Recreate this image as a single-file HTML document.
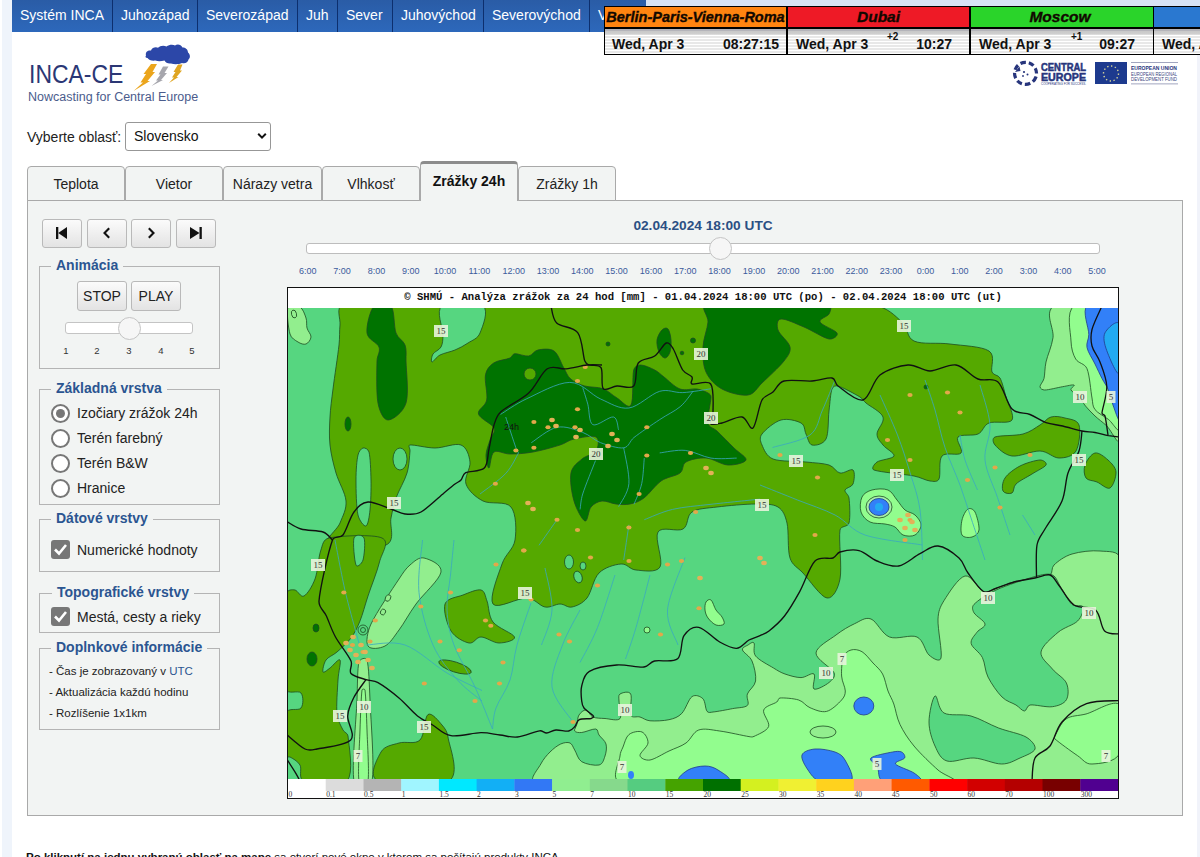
<!DOCTYPE html>
<html><head><meta charset="utf-8">
<style>
*{box-sizing:border-box}
html,body{margin:0;padding:0;width:1200px;height:857px;overflow:hidden;background:#fff;font-family:"Liberation Sans",sans-serif;color:#222}
.a{position:absolute}
#lstrip{left:2px;top:0;width:10px;height:857px;background:#eff4fb}
#rstrip{left:1197px;top:0;width:3px;height:857px;background:#f1f3fa}
#topbg{left:646px;top:0;width:554px;height:7px;background:#d8e3f4}
#nav{left:12px;top:0;width:634px;height:32px;background:linear-gradient(#2a5ca6,#2d68bb)}
.sep{top:0;width:1px;height:32px;background:#0d2f6e}
.nv{top:0;height:31px;line-height:31px;font-size:14px;color:#fff;white-space:nowrap}
/* clocks */
#clk{left:604px;top:6px;width:700px;height:49px;background:#000}
.ch{top:1px;height:20px;line-height:20px;font-size:14.5px;font-weight:bold;font-style:italic;color:#120800;-webkit-text-stroke:0.35px #120800;text-align:center;overflow:hidden;white-space:nowrap}
.cd{white-space:nowrap;overflow:hidden;top:23px;height:25px;background:linear-gradient(#b4b4ba 0,#b4b4ba 2px,#c8c8c8 2px,#cfcfcf 5px,rgba(255,255,255,0) 6px),repeating-linear-gradient(#ffffff 0,#ffffff 1.5px,#e8e8e8 1.5px,#e8e8e8 3px);font-size:14px;font-weight:bold;color:#111}
</style></head><body>
<div class="a" id="lstrip"></div>
<div class="a" id="rstrip"></div>
<div class="a" id="topbg"></div>
<div class="a" id="nav"></div>
<div class="a nv" style="left:20px">Systém INCA</div>
<div class="a sep" style="left:112px"></div>
<div class="a nv" style="left:121px">Juhozápad</div>
<div class="a sep" style="left:197px"></div>
<div class="a nv" style="left:206px">Severozápad</div>
<div class="a sep" style="left:297px"></div>
<div class="a nv" style="left:306px">Juh</div>
<div class="a sep" style="left:337px"></div>
<div class="a nv" style="left:346px">Sever</div>
<div class="a sep" style="left:392px"></div>
<div class="a nv" style="left:401px">Juhovýchod</div>
<div class="a sep" style="left:483px"></div>
<div class="a nv" style="left:492px">Severovýchod</div>
<div class="a sep" style="left:589px"></div>
<div class="a nv" style="left:598px">Východ</div>

<div class="a" id="clk"></div>
<div class="a" style="left:605px;top:7px;width:181px;height:20px;background:#ff8410"></div>
<div class="a ch" style="left:605px;top:7px;width:181px">Berlin-Paris-Vienna-Roma</div>
<div class="a" style="left:788px;top:7px;width:181px;height:20px;background:#ee1a26"></div>
<div class="a ch" style="left:788px;top:7px;width:181px;font-size:15.5px">Dubai</div>
<div class="a" style="left:971px;top:7px;width:182px;height:20px;background:#2ad42a"></div>
<div class="a ch" style="left:969px;top:7px;width:182px;font-size:15.5px">Moscow</div>
<div class="a" style="left:1154px;top:7px;width:46px;height:20px;background:#2a78d0"></div>


<div class="a cd" style="left:605px;top:29px;width:181px"><span class="a" style="left:7px;top:6.5px">Wed, Apr 3</span><span class="a" style="right:7px;top:6.5px">08:27:15</span></div>
<div class="a cd" style="left:788px;top:29px;width:181px"><span class="a" style="left:8px;top:6.5px">Wed, Apr 3</span><span class="a" style="left:99px;top:2px;font-size:10px">+2</span><span class="a" style="right:17px;top:6.5px">10:27</span></div>
<div class="a cd" style="left:971px;top:29px;width:182px"><span class="a" style="left:8px;top:6.5px">Wed, Apr 3</span><span class="a" style="left:100px;top:2px;font-size:10px">+1</span><span class="a" style="right:18px;top:6.5px">09:27</span></div>
<div class="a cd" style="left:1154px;top:29px;width:46px"><span class="a" style="left:8px;top:6.5px">Wed, A</span></div>
<!-- LOGO -->
<div class="a" style="left:29px;top:60px;font-size:25.5px;color:#2b3775;transform:scaleX(0.9);transform-origin:0 0;white-space:nowrap">INCA-CE</div>
<div class="a" style="left:28px;top:89.5px;font-size:12.5px;color:#4b5c8c;white-space:nowrap">Nowcasting for Central Europe</div>
<svg class="a" style="left:130px;top:42px" width="70" height="52" viewBox="0 0 70 52">
<path d="M16 13.5 C15 10 18 8 21 8.5 C22 5.5 26 4.5 28 5.8 C30 3.5 34 3.2 36.5 4.5 C39 2.5 43 2.3 45 3.5 C47.5 1.8 51 2.5 52.5 5.5 C55.5 5.5 58 7.5 58 10.5 C60.5 12.5 60.5 16 58.5 17.5 C58 20.5 55 22 52 21 C49 22.5 44 22.5 41 21.5 C38 22 35.5 20.5 34.5 18.5 C31 19.5 27.5 19.5 25.5 18.5 C22 19 18.5 18 17.5 16 C15.5 16 15 14.5 16 13.5 Z" fill="#2c47a8"/>
<path d="M21 22 L27 22 L22.5 30 L25 30 L17.5 39 L20 39 L3.5 49 L13 40.5 L10.5 40.5 L16 32 L13.5 32 Z" fill="#eba51c"/>
<path d="M33 24.5 L38.5 24.5 L34.5 31 L37 31 L31 38 L33 38 L21.5 44 L28 38.5 L26 38.5 L30.5 32.5 L28.5 32.5 Z" fill="#a6a6ad"/>
<path d="M48 22.5 L52.5 22.5 L50 28.5 L52 28.5 L46.5 35 L48.5 35 L39 41 L44 35.5 L42 35.5 L45.5 30 L43.5 30 Z" fill="#dfa521"/>
</svg>
<!-- EU logos -->
<svg class="a" style="left:1010px;top:60px" width="175" height="28" viewBox="0 0 175 28">
<g fill="#27357c">
<circle cx="15.5" cy="13.5" r="11" fill="none" stroke="#27357c" stroke-width="3.2" stroke-dasharray="5.5 3" transform="rotate(20 16 13.5)"/>
<path d="M5 12 L9.5 6.5 L10.5 11 Z"/>
<circle cx="14" cy="12" r="1.1"/><circle cx="17.5" cy="14.5" r="1"/><circle cx="13" cy="16" r="0.9"/>
</g>
<text x="31" y="10.5" font-family="Liberation Sans" font-weight="bold" font-size="10.5" fill="#27357c" stroke="#27357c" stroke-width="0.5" textLength="45" lengthAdjust="spacingAndGlyphs">CENTRAL</text>
<text x="31" y="20.5" font-family="Liberation Sans" font-weight="bold" font-size="10.5" fill="#27357c" stroke="#27357c" stroke-width="0.5" textLength="45" lengthAdjust="spacingAndGlyphs">EUROPE</text>
<text x="31" y="25" font-family="Liberation Sans" font-size="3" fill="#27357c" textLength="45" lengthAdjust="spacingAndGlyphs">COOPERATING FOR SUCCESS.</text>
<rect x="85" y="2" width="32" height="22" fill="#1d3a8e"/>
<circle cx="101" cy="13.5" r="7.5" fill="none" stroke="#dcd89a" stroke-width="1.4" stroke-dasharray="1.4 2.5"/>
<rect x="121" y="2" width="47" height="0.8" fill="#8a90b0"/>
<rect x="121" y="23.5" width="47" height="0.8" fill="#8a90b0"/>
<text x="121" y="9.5" font-family="Liberation Sans" font-size="6" font-weight="bold" fill="#27357c" textLength="46" lengthAdjust="spacingAndGlyphs">EUROPEAN UNION</text>
<text x="121" y="15.5" font-family="Liberation Sans" font-size="5" fill="#3a4580" textLength="46" lengthAdjust="spacingAndGlyphs">EUROPEAN REGIONAL</text>
<text x="121" y="21" font-family="Liberation Sans" font-size="5" fill="#3a4580" textLength="46" lengthAdjust="spacingAndGlyphs">DEVELOPMENT FUND</text>
</svg>
<!-- select -->
<div class="a" style="left:27px;top:129px;font-size:14px;color:#222">Vyberte oblasť:</div>
<div class="a" style="left:125px;top:122px;width:146px;height:29px;border:1px solid #979797;border-radius:3px;background:#fff"></div>
<div class="a" style="left:134px;top:127.5px;font-size:14px;color:#111">Slovensko</div>
<svg class="a" style="left:257px;top:132px" width="10" height="8" viewBox="0 0 10 8"><path d="M1.2 1.8 L5 5.6 L8.8 1.8" stroke="#111" stroke-width="2" fill="none"/></svg>
<!-- panel -->
<div class="a" style="left:27px;top:200px;width:1156px;height:616px;border:1px solid #a9a9a9;background:#f2f4f3"></div>
<!-- tabs -->
<div class="a" style="left:27px;top:166px;width:98px;height:35px;border:1px solid #a9a9a9;border-radius:4px 4px 0 0;background:#f2f4f3"></div>
<div class="a" style="left:27px;top:176px;width:98px;text-align:center;font-size:14px;color:#222">Teplota</div>
<div class="a" style="left:125px;top:166px;width:98px;height:35px;border:1px solid #a9a9a9;border-radius:4px 4px 0 0;background:#f2f4f3"></div>
<div class="a" style="left:125px;top:176px;width:98px;text-align:center;font-size:14px;color:#222">Vietor</div>
<div class="a" style="left:223px;top:166px;width:99px;height:35px;border:1px solid #a9a9a9;border-radius:4px 4px 0 0;background:#f2f4f3"></div>
<div class="a" style="left:223px;top:176px;width:99px;text-align:center;font-size:14px;color:#222">Nárazy vetra</div>
<div class="a" style="left:322px;top:166px;width:98px;height:35px;border:1px solid #a9a9a9;border-radius:4px 4px 0 0;background:#f2f4f3"></div>
<div class="a" style="left:322px;top:176px;width:98px;text-align:center;font-size:14px;color:#222">Vlhkosť</div>
<div class="a" style="left:420px;top:161px;width:98px;height:40px;border:1px solid #a9a9a9;border-top:3px solid #8c8c8c;border-bottom:none;border-radius:4px 4px 0 0;background:#f2f4f3"></div>
<div class="a" style="left:420px;top:172.5px;width:98px;text-align:center;font-size:14px;font-weight:bold;color:#111">Zrážky 24h</div>
<div class="a" style="left:518px;top:166px;width:98px;height:35px;border:1px solid #a9a9a9;border-radius:4px 4px 0 0;background:#f2f4f3"></div>
<div class="a" style="left:518px;top:176px;width:98px;text-align:center;font-size:14px;color:#222">Zrážky 1h</div>
<!-- sidebar -->
<style>
.btn{border:1px solid #b9b9b9;border-radius:3px;background:linear-gradient(#fbfbfb,#e3e3e3)}
.fs{border:1px solid #b4b4b4}
.lg{font-size:14px;font-weight:bold;color:#2b5591;background:#f2f4f3;padding:0 5px;white-space:nowrap}
.rl{font-size:14px;color:#222;white-space:nowrap}
.rad{width:19px;height:19px;border:2px solid #777;border-radius:50%;background:#fff}
.chk{width:19px;height:19px;border-radius:3px;background:#777}
.inf{font-size:11.5px;color:#222;white-space:nowrap}
</style>
<div class="a btn" style="left:42px;top:219px;width:40px;height:29px"></div>
<div class="a btn" style="left:87px;top:219px;width:40px;height:29px"></div>
<div class="a btn" style="left:131px;top:219px;width:40px;height:29px"></div>
<div class="a btn" style="left:176px;top:219px;width:40px;height:29px"></div>
<svg class="a" style="left:42px;top:219px" width="180" height="29">
<rect x="14" y="8" width="2.3" height="12" fill="#111"/><path d="M16.2 14 L25 8 L25 20 Z" fill="#111"/>
<path d="M67.2 9.2 L62.5 14 L67.2 18.8" stroke="#111" stroke-width="2.1" fill="none"/>
<path d="M106.8 9.2 L111.5 14 L106.8 18.8" stroke="#111" stroke-width="2.1" fill="none"/>
<path d="M148 8 L157.5 14 L148 20 Z" fill="#111"/><rect x="157.5" y="8" width="2.3" height="12" fill="#111"/>
</svg>
<!-- Animacia -->
<div class="a fs" style="left:39px;top:266px;width:181px;height:103px"></div>
<div class="a lg" style="left:51px;top:257px">Animácia</div>
<div class="a btn" style="left:77px;top:281px;width:50px;height:30px"></div>
<div class="a btn" style="left:131px;top:281px;width:50px;height:30px"></div>
<div class="a rl" style="left:77px;top:288px;width:50px;text-align:center">STOP</div>
<div class="a rl" style="left:131px;top:288px;width:50px;text-align:center">PLAY</div>
<div class="a" style="left:65px;top:322px;width:128px;height:12px;border:1px solid #c4c4c4;border-radius:3px;background:#fff"></div>
<div class="a" style="left:118px;top:317px;width:23px;height:23px;border:1px solid #c4c4c4;border-radius:50%;background:#f6f6f6"></div>
<div class="a" style="left:61px;top:345px;width:10px;text-align:center;font-size:9.5px;color:#333">1</div>
<div class="a" style="left:92px;top:345px;width:10px;text-align:center;font-size:9.5px;color:#333">2</div>
<div class="a" style="left:124px;top:345px;width:10px;text-align:center;font-size:9.5px;color:#333">3</div>
<div class="a" style="left:156px;top:345px;width:10px;text-align:center;font-size:9.5px;color:#333">4</div>
<div class="a" style="left:187px;top:345px;width:10px;text-align:center;font-size:9.5px;color:#333">5</div>
<!-- Zakladna vrstva -->
<div class="a fs" style="left:39px;top:389px;width:181px;height:116px"></div>
<div class="a lg" style="left:51px;top:380px">Základná vrstva</div>
<div class="a rad" style="left:51px;top:404px"></div><div class="a" style="left:56px;top:409px;width:9px;height:9px;border-radius:50%;background:#777"></div>
<div class="a rad" style="left:51px;top:429px"></div>
<div class="a rad" style="left:51px;top:454px"></div>
<div class="a rad" style="left:51px;top:479px"></div>
<div class="a rl" style="left:77px;top:405px">Izočiary zrážok 24h</div>
<div class="a rl" style="left:77px;top:430px">Terén farebný</div>
<div class="a rl" style="left:77px;top:455px">Terén B&amp;W</div>
<div class="a rl" style="left:77px;top:480px">Hranice</div>
<!-- Datove vrstvy -->
<div class="a fs" style="left:39px;top:519px;width:181px;height:53px"></div>
<div class="a lg" style="left:51px;top:510px">Dátové vrstvy</div>
<div class="a chk" style="left:51px;top:540px"></div>
<svg class="a" style="left:51px;top:540px" width="19" height="19"><path d="M4 9.5 L8 13.5 L15 5" stroke="#fff" stroke-width="2.6" fill="none"/></svg>
<div class="a rl" style="left:77px;top:542px">Numerické hodnoty</div>
<!-- Topograficke -->
<div class="a fs" style="left:39px;top:593px;width:181px;height:40px"></div>
<div class="a lg" style="left:52px;top:584px">Topografické vrstvy</div>
<div class="a chk" style="left:51px;top:607px"></div>
<svg class="a" style="left:51px;top:607px" width="19" height="19"><path d="M4 9.5 L8 13.5 L15 5" stroke="#fff" stroke-width="2.6" fill="none"/></svg>
<div class="a rl" style="left:77px;top:609px">Mestá, cesty a rieky</div>
<!-- Doplnkove -->
<div class="a fs" style="left:39px;top:648px;width:181px;height:82px"></div>
<div class="a lg" style="left:51px;top:639px">Doplnkové informácie</div>
<div class="a inf" style="left:49px;top:665px">- Čas je zobrazovaný v <span style="color:#2b5591">UTC</span></div>
<div class="a inf" style="left:49px;top:686px">- Aktualizácia každú hodinu</div>
<div class="a inf" style="left:49px;top:707px">- Rozlíšenie 1x1km</div>
<!-- time slider -->
<div class="a" style="left:600px;top:218px;width:206px;text-align:center;font-size:13.7px;font-weight:bold;color:#2b4f83">02.04.2024 18:00 UTC</div>
<div class="a" style="left:306px;top:243px;width:794px;height:11px;border:1px solid #bdbdbd;border-radius:3px;background:#fff"></div>
<div class="a" style="left:709px;top:237px;width:23px;height:23px;border:1px solid #c4c4c4;border-radius:50%;background:#f6f6f6"></div>
<div class="a" style="left:287.8px;top:266px;width:40px;text-align:center;font-size:9px;color:#3b5a9c">6:00</div>
<div class="a" style="left:322.1px;top:266px;width:40px;text-align:center;font-size:9px;color:#3b5a9c">7:00</div>
<div class="a" style="left:356.4px;top:266px;width:40px;text-align:center;font-size:9px;color:#3b5a9c">8:00</div>
<div class="a" style="left:390.7px;top:266px;width:40px;text-align:center;font-size:9px;color:#3b5a9c">9:00</div>
<div class="a" style="left:425.1px;top:266px;width:40px;text-align:center;font-size:9px;color:#3b5a9c">10:00</div>
<div class="a" style="left:459.4px;top:266px;width:40px;text-align:center;font-size:9px;color:#3b5a9c">11:00</div>
<div class="a" style="left:493.7px;top:266px;width:40px;text-align:center;font-size:9px;color:#3b5a9c">12:00</div>
<div class="a" style="left:528.0px;top:266px;width:40px;text-align:center;font-size:9px;color:#3b5a9c">13:00</div>
<div class="a" style="left:562.3px;top:266px;width:40px;text-align:center;font-size:9px;color:#3b5a9c">14:00</div>
<div class="a" style="left:596.6px;top:266px;width:40px;text-align:center;font-size:9px;color:#3b5a9c">15:00</div>
<div class="a" style="left:630.9px;top:266px;width:40px;text-align:center;font-size:9px;color:#3b5a9c">16:00</div>
<div class="a" style="left:665.2px;top:266px;width:40px;text-align:center;font-size:9px;color:#3b5a9c">17:00</div>
<div class="a" style="left:699.6px;top:266px;width:40px;text-align:center;font-size:9px;color:#3b5a9c">18:00</div>
<div class="a" style="left:733.9px;top:266px;width:40px;text-align:center;font-size:9px;color:#3b5a9c">19:00</div>
<div class="a" style="left:768.2px;top:266px;width:40px;text-align:center;font-size:9px;color:#3b5a9c">20:00</div>
<div class="a" style="left:802.5px;top:266px;width:40px;text-align:center;font-size:9px;color:#3b5a9c">21:00</div>
<div class="a" style="left:836.8px;top:266px;width:40px;text-align:center;font-size:9px;color:#3b5a9c">22:00</div>
<div class="a" style="left:871.1px;top:266px;width:40px;text-align:center;font-size:9px;color:#3b5a9c">23:00</div>
<div class="a" style="left:905.4px;top:266px;width:40px;text-align:center;font-size:9px;color:#3b5a9c">0:00</div>
<div class="a" style="left:939.7px;top:266px;width:40px;text-align:center;font-size:9px;color:#3b5a9c">1:00</div>
<div class="a" style="left:974.1px;top:266px;width:40px;text-align:center;font-size:9px;color:#3b5a9c">2:00</div>
<div class="a" style="left:1008.4px;top:266px;width:40px;text-align:center;font-size:9px;color:#3b5a9c">3:00</div>
<div class="a" style="left:1042.7px;top:266px;width:40px;text-align:center;font-size:9px;color:#3b5a9c">4:00</div>
<div class="a" style="left:1077.0px;top:266px;width:40px;text-align:center;font-size:9px;color:#3b5a9c">5:00</div>
<!-- map box -->
<div class="a" style="left:287px;top:287px;width:832px;height:512px;border:1px solid #111;background:#fff"></div>
<div class="a" style="left:288px;top:290.5px;width:830px;text-align:center;font-family:'Liberation Mono',monospace;font-weight:bold;font-size:10.6px;color:#111;white-space:nowrap">© SHMÚ - Analýza zrážok za 24 hod [mm] - 01.04.2024 18:00 UTC (po) - 02.04.2024 18:00 UTC (ut)</div>
<div id="map" class="a" style="left:288px;top:308px;width:830px;height:471px;background:#56d680;overflow:hidden"></div>
<svg class="a" style="left:288px;top:308px" width="830" height="471" viewBox="0 0 830 471"><path d="M247.0 473.0 C239.8 472.8 250.3 460.8 252.8 456.0 C255.3 451.2 258.7 447.3 262.0 444.0 C265.3 440.7 269.4 437.5 272.7 436.0 C276.0 434.5 279.7 434.0 282.0 435.0 C284.3 436.0 284.9 439.1 286.7 442.0 C288.7 445.1 289.7 451.2 293.7 453.7 C297.8 456.2 307.1 457.9 311.0 457.0 C314.9 456.1 315.8 451.5 317.0 448.0 C318.2 444.5 319.0 439.5 318.0 436.0 C317.0 432.5 312.7 429.5 311.0 427.0 C309.4 424.7 310.4 421.4 307.7 421.0 C304.8 420.6 297.2 424.2 293.7 424.5 C290.8 424.8 287.5 424.4 286.7 423.0 C285.9 421.6 288.3 418.7 289.0 416.0 C289.7 413.3 289.5 409.3 291.0 407.0 C292.5 404.7 295.7 401.7 298.0 402.0 C300.3 402.3 301.8 407.6 305.0 409.0 C308.2 410.4 312.5 410.2 317.0 410.5 C321.5 410.8 329.7 413.4 332.0 410.5 C334.3 407.6 331.0 397.1 331.0 393.0 C331.0 390.2 330.1 387.2 332.0 386.0 C333.9 384.8 340.9 382.5 342.7 386.0 C344.5 389.5 341.2 403.2 342.7 407.0 C344.1 410.5 348.8 408.0 352.0 409.0 C355.2 410.0 357.7 412.4 362.0 412.8 C366.8 413.2 375.7 412.9 381.0 411.7 C386.3 410.5 390.0 409.2 393.8 405.4 C397.6 401.5 400.5 391.1 404.0 388.6 C407.5 386.2 412.4 388.3 414.9 390.7 C417.4 393.2 417.3 401.1 419.0 403.3 C420.5 405.2 422.6 404.3 425.0 404.0 C429.3 403.6 439.0 401.7 444.7 400.6 C450.4 399.5 456.9 399.8 459.4 397.4 C461.8 395.0 458.0 390.1 459.4 386.0 C460.8 381.9 466.8 378.5 467.6 373.0 C468.4 367.5 466.2 358.2 464.0 353.0 C461.8 347.8 455.2 344.7 454.5 342.0 C453.8 339.3 458.1 338.2 460.0 337.0 C461.9 335.8 464.7 333.2 466.0 335.0 C467.3 336.8 464.4 343.9 467.6 348.0 C470.9 352.2 480.6 357.0 485.5 360.0 C489.9 362.7 492.4 364.4 497.0 366.0 C501.6 367.6 508.2 369.6 513.0 369.6 C517.8 369.6 523.8 364.1 526.0 366.0 C528.2 367.9 523.5 379.6 526.0 381.0 C528.5 382.4 537.7 377.2 541.0 374.5 C544.3 371.8 547.8 368.7 546.0 364.7 C543.8 359.8 527.7 351.3 528.0 345.0 C528.3 338.7 541.6 331.9 548.0 327.0 C554.4 322.1 560.8 318.4 566.6 315.7 C572.4 313.0 577.2 308.8 583.0 311.0 C588.8 313.2 593.8 326.0 601.5 329.0 C609.2 332.0 622.4 326.0 629.0 329.0 C635.6 332.0 637.0 343.5 641.0 347.0 C644.7 350.3 651.8 354.8 653.0 350.0 C654.5 344.0 649.5 320.6 650.0 311.0 C650.4 303.3 651.9 299.2 656.0 292.6 C660.5 285.4 670.4 269.5 677.0 268.0 C683.6 266.5 690.4 281.4 695.5 283.5 C700.1 285.4 702.8 282.0 707.6 280.5 C712.7 278.9 719.4 275.8 726.0 274.0 C732.6 272.2 741.0 271.2 747.0 270.0 C753.0 268.8 758.8 269.2 762.0 267.0 C765.2 264.8 762.9 260.0 766.0 257.0 C769.7 253.5 776.3 248.3 784.0 246.0 C791.7 243.7 804.0 242.2 812.0 243.0 C820.0 243.8 831.3 242.4 832.0 251.0 C835.3 289.3 915.0 441.5 832.0 473.0 C734.5 510.0 343.5 475.8 247.0 473.0 Z" fill="#92ee8e" stroke="#1d4d22" stroke-width="0.8"/><path d="M766.5 -2.0 C777.7 -7.3 821.1 -24.3 832.0 -2.0 C842.9 20.3 834.2 112.0 832.0 132.0 C831.2 139.7 823.0 122.0 818.8 118.0 C814.6 114.0 810.5 111.3 807.0 108.0 C803.5 104.7 800.2 101.2 797.5 98.0 C794.8 94.8 793.4 91.2 791.0 88.5 C788.6 85.8 783.8 83.9 783.0 82.0 C782.2 80.1 787.4 77.5 786.0 77.0 C784.6 76.5 779.2 77.9 774.7 78.7 C769.8 79.5 760.5 82.0 756.7 82.0 C754.4 82.0 752.1 80.6 752.0 78.7 C751.9 76.8 755.1 74.0 756.0 70.5 C757.0 66.4 756.6 60.5 758.0 54.0 C759.5 47.2 763.6 39.0 765.0 29.7 C766.4 20.4 755.3 3.3 766.5 -2.0 Z" fill="#92ee8e" stroke="#1d4d22" stroke-width="0.8"/><path d="M786.0 -2.0 C794.2 -7.8 825.6 -19.2 832.0 -2.0 C839.7 18.5 833.9 102.1 832.0 121.0 C831.4 127.0 824.6 114.6 820.4 111.4 C816.2 108.2 809.7 105.2 807.0 101.6 C804.3 98.0 804.9 94.7 804.0 90.0 C802.7 83.2 801.7 67.2 799.0 60.7 C796.7 55.2 790.4 55.6 787.7 51.0 C785.0 46.4 783.2 40.4 783.0 33.0 C782.7 24.2 777.8 3.8 786.0 -2.0 Z" fill="#92fd8e" stroke="#1d4d22" stroke-width="0.8"/><path d="M799.0 -2.0 C804.2 -6.7 828.3 -14.7 832.0 -2.0 C837.5 16.9 833.1 94.7 832.0 111.4 C831.6 117.4 827.2 102.9 825.3 98.0 C823.4 93.1 822.3 86.6 820.4 82.0 C818.5 77.4 816.2 74.8 814.0 70.5 C811.8 66.2 809.5 61.2 807.0 56.0 C804.5 50.8 800.0 44.4 799.0 39.5 C798.0 34.6 800.8 31.7 800.8 26.4 C800.8 19.5 793.8 2.7 799.0 -2.0 Z" fill="#3280f8" stroke="#223a8a" stroke-width="0.8"/><path d="M832.0 16.6 C829.6 10.2 819.2 20.5 817.0 24.8 C814.8 29.2 816.3 35.9 818.8 42.7 C821.3 49.5 829.8 70.0 832.0 65.6 C834.2 61.3 834.5 23.4 832.0 16.6 Z" fill="#22aaf2" stroke="#223a8a" stroke-width="0.8"/><path d="M55.0 -2.0 C144.0 -5.2 492.8 -4.7 586.0 -2.0 C598.9 -1.6 607.3 8.2 614.0 14.0 C620.7 19.8 618.0 29.3 626.0 33.0 C634.0 36.7 649.5 34.3 662.0 36.0 C674.5 37.7 694.0 38.3 701.0 43.0 C708.0 47.7 702.2 59.5 704.0 64.0 C705.5 67.7 710.0 66.5 712.0 70.0 C714.3 74.2 716.0 82.0 718.0 89.0 C720.0 96.0 726.8 107.7 724.0 112.0 C721.2 116.3 706.7 112.7 701.0 115.0 C695.3 117.3 695.2 123.7 690.0 126.0 C684.8 128.3 672.8 125.8 670.0 129.0 C667.2 132.2 675.7 141.8 673.0 145.0 C670.3 148.2 657.7 143.7 654.0 148.0 C650.3 152.3 653.0 166.8 651.0 171.0 C649.4 174.3 645.7 173.4 642.0 173.0 C637.8 172.5 632.6 169.3 626.0 168.0 C616.7 166.2 592.2 164.3 586.0 162.0 C582.8 160.8 586.2 156.0 589.0 154.0 C592.3 151.7 605.0 150.8 606.0 148.0 C607.0 145.2 597.8 140.7 595.0 137.0 C592.2 133.3 589.0 130.7 589.0 126.0 C589.0 121.3 596.8 114.2 595.0 109.0 C593.2 103.8 581.8 98.3 578.0 95.0 C575.4 92.8 574.9 90.8 572.0 89.0 C567.3 86.2 554.7 79.3 550.0 78.0 C547.4 77.3 544.9 78.5 544.0 81.0 C542.5 85.2 542.0 94.7 541.0 103.0 C540.0 111.3 540.8 125.3 538.0 131.0 C535.3 136.4 527.3 137.8 524.0 137.0 C520.7 136.2 519.8 129.7 518.0 126.0 C516.2 122.3 517.2 117.3 513.0 115.0 C508.8 112.7 499.5 110.2 493.0 112.0 C486.5 113.8 477.2 121.8 474.0 126.0 C471.3 129.5 472.2 133.0 474.0 137.0 C475.8 141.2 478.4 148.4 485.0 151.0 C492.3 153.8 508.7 153.0 518.0 154.0 C527.2 155.0 535.3 155.2 541.0 157.0 C546.2 158.7 548.0 164.2 552.0 165.0 C556.0 165.8 562.8 160.2 565.0 162.0 C567.2 163.8 566.3 172.7 565.0 176.0 C563.7 179.3 557.7 179.7 557.0 182.0 C556.3 184.3 560.6 186.4 561.0 190.0 C561.7 195.5 562.5 209.7 561.0 215.0 C559.8 219.4 552.7 217.5 552.0 222.0 C550.5 231.3 554.2 259.7 552.0 271.0 C550.3 280.0 545.2 291.0 539.0 290.0 C532.8 289.0 521.2 271.7 515.0 265.0 C509.6 259.2 504.4 257.6 502.0 250.0 C499.3 241.7 501.0 223.5 499.0 215.0 C497.3 207.9 495.2 202.2 490.0 199.0 C484.8 195.8 476.9 196.0 468.0 196.0 C457.8 196.0 439.7 197.7 429.0 199.0 C418.9 200.3 409.7 200.3 404.0 204.0 C398.3 207.7 400.7 217.7 395.0 221.0 C389.3 224.3 373.8 217.7 370.0 224.0 C366.2 230.3 375.7 252.7 372.0 259.0 C368.3 265.3 354.5 262.5 348.0 262.0 C341.6 261.5 339.2 255.5 333.0 256.0 C326.8 256.5 316.7 259.3 311.0 265.0 C305.3 270.7 303.5 284.3 299.0 290.0 C294.6 295.5 288.5 298.0 284.0 299.0 C279.5 300.0 276.5 296.0 272.0 296.0 C267.5 296.0 262.5 300.0 257.0 299.0 C251.5 298.0 247.0 290.5 239.0 290.0 C230.3 289.5 209.2 301.7 205.0 296.0 C200.8 290.3 210.3 266.7 214.0 256.0 C217.5 245.7 225.5 241.5 227.0 232.0 C228.5 222.5 228.3 205.5 223.0 199.0 C217.7 192.5 202.5 196.8 195.0 193.0 C187.5 189.2 180.2 182.5 178.0 176.0 C175.8 169.5 182.8 160.5 182.0 154.0 C181.2 147.5 178.8 139.3 173.0 137.0 C167.2 134.7 155.5 140.0 147.0 140.0 C138.5 140.0 126.2 136.5 122.0 137.0 C119.6 137.3 122.3 140.6 122.0 143.0 C121.5 147.7 121.3 157.2 119.0 165.0 C116.7 172.8 110.7 182.5 108.0 190.0 C105.3 197.5 104.7 202.2 103.0 210.0 C101.3 217.8 108.1 232.6 98.0 237.0 C87.7 241.5 48.7 240.7 41.0 237.0 C33.3 233.3 49.2 222.3 52.0 215.0 C54.8 207.7 58.7 201.3 58.0 193.0 C57.3 184.7 50.7 174.3 48.0 165.0 C45.3 155.7 43.0 146.3 42.0 137.0 C41.0 127.7 41.5 118.3 42.0 109.0 C42.5 99.7 43.6 92.2 45.0 81.0 C46.5 69.0 49.8 47.7 51.0 37.0 C51.9 29.0 51.3 23.5 52.0 17.0 C52.7 10.5 47.3 -1.7 55.0 -2.0 Z" fill="#55a900" stroke="#1d4d22" stroke-width="0.8"/><path d="M-1.0 285.0 C-0.7 281.6 4.2 281.5 7.0 282.0 C9.8 282.5 12.7 289.8 16.0 288.0 C19.3 286.2 24.2 278.5 27.0 271.0 C29.8 263.5 30.3 249.8 32.6 243.0 C34.6 237.1 34.9 231.3 41.0 230.0 C51.2 227.8 85.6 226.0 94.0 230.0 C102.4 234.0 93.8 244.6 91.5 254.0 C89.2 263.7 83.2 278.2 80.0 288.0 C76.8 297.8 74.8 306.0 72.0 313.0 C69.2 320.0 66.8 324.8 63.0 330.0 C59.2 335.2 53.2 340.3 49.0 344.0 C44.9 347.6 40.3 348.7 38.0 352.0 C35.7 355.3 34.3 362.7 35.0 364.0 C35.7 365.3 39.4 361.9 42.0 360.0 C44.8 358.0 50.7 350.0 52.0 352.0 C53.3 354.0 50.4 364.0 50.0 372.0 C49.5 381.0 48.2 397.7 49.0 406.0 C49.7 412.8 53.2 418.3 55.0 422.0 C56.4 424.8 59.8 424.9 60.0 428.0 C60.7 436.5 66.3 465.5 59.0 473.0 C51.7 480.5 23.8 475.7 16.0 473.0 C9.8 470.9 14.3 461.0 12.0 457.0 C9.7 453.0 4.3 450.3 2.0 449.0 C0.6 448.2 -1.9 450.6 -2.0 449.0 C-2.7 441.7 -4.5 413.2 -2.0 405.0 C-0.1 399.0 10.5 403.3 13.0 400.0 C15.5 396.7 15.5 388.2 13.0 385.0 C10.5 381.8 -1.1 387.1 -2.0 381.0 C-4.3 364.3 -2.5 301.5 -1.0 285.0 Z" fill="#55a900" stroke="#1d4d22" stroke-width="0.8"/><path d="M707.0 129.0 C711.7 127.2 727.5 128.0 735.0 126.0 C742.4 124.0 747.3 119.8 752.0 117.0 C756.7 114.2 758.8 110.2 763.0 109.0 C767.2 107.8 772.3 108.7 777.0 110.0 C781.7 111.3 789.2 111.5 791.0 117.0 C792.8 122.5 791.3 137.5 788.0 143.0 C784.7 148.5 777.0 150.0 771.0 150.0 C765.0 150.0 759.8 143.3 752.0 143.0 C744.2 142.7 731.5 149.0 724.0 148.0 C716.5 147.0 709.8 140.2 707.0 137.0 C704.9 134.6 704.0 130.2 707.0 129.0 Z" fill="#55a900" stroke="#1d4d22" stroke-width="0.8"/><path d="M717.0 170.0 C719.8 165.8 726.2 161.0 732.0 158.0 C737.8 155.0 747.7 152.2 752.0 152.0 C755.1 151.9 759.3 154.7 758.0 157.0 C756.7 159.3 749.0 162.8 744.0 166.0 C739.0 169.2 731.3 172.8 728.0 176.0 C725.1 178.7 726.2 183.8 724.0 185.0 C721.8 186.2 716.2 185.5 715.0 183.0 C713.8 180.5 714.2 174.2 717.0 170.0 Z" fill="#55a900" stroke="#1d4d22" stroke-width="0.8"/><path d="M797.0 157.0 C798.5 152.8 803.2 145.8 807.0 145.0 C810.8 144.2 816.5 148.8 820.0 152.0 C823.5 155.2 827.7 159.3 828.0 164.0 C828.3 168.7 825.2 178.3 822.0 180.0 C818.8 181.7 813.0 175.7 809.0 174.0 C805.0 172.3 800.0 172.8 798.0 170.0 C796.0 167.2 795.5 161.2 797.0 157.0 Z" fill="#55a900" stroke="#1d4d22" stroke-width="0.8"/><path d="M157.0 296.0 C159.0 290.0 169.0 289.3 175.0 287.0 C181.0 284.7 189.0 281.0 193.0 282.0 C197.0 283.0 197.2 288.3 199.0 293.0 C201.0 298.3 200.4 308.0 205.0 314.0 C209.6 320.0 225.5 325.5 226.5 329.0 C227.5 332.5 216.6 335.0 211.0 335.0 C205.4 335.0 198.0 329.0 193.0 329.0 C188.0 329.0 186.0 336.0 181.0 335.0 C176.0 334.0 167.0 329.5 163.0 323.0 C159.0 316.5 155.0 302.0 157.0 296.0 Z" fill="#55a900" stroke="#1d4d22" stroke-width="0.8"/><ellipse cx="167.0" cy="359.0" rx="17" ry="5" fill="#55a900" transform="rotate(18 167.0 359.0)" stroke="#1d4d22" stroke-width="0.8"/><path d="M140.0 406.5 C143.7 404.0 150.7 413.2 154.0 417.0 C157.3 420.8 159.3 423.7 160.0 429.0 C161.2 438.3 172.7 465.7 161.0 473.0 C149.3 480.3 101.3 477.8 90.0 473.0 C79.3 468.4 89.5 450.3 93.0 444.0 C96.5 437.7 104.5 437.0 111.0 435.0 C117.5 433.0 127.2 436.8 132.0 432.0 C136.8 427.2 136.3 409.0 140.0 406.5 Z" fill="#55a900" stroke="#1d4d22" stroke-width="0.8"/><path d="M154.0 -2.0 C160.7 -6.8 188.7 -6.5 195.0 -2.0 C201.3 2.5 194.5 18.8 192.0 25.0 C189.7 30.8 184.2 32.2 180.0 35.0 C175.8 37.8 171.7 40.0 167.0 42.0 C162.3 44.0 155.8 45.0 152.0 47.0 C148.2 49.0 145.2 54.2 144.0 54.0 C142.8 53.8 143.5 48.5 145.0 46.0 C146.5 43.5 151.3 42.2 153.0 39.0 C154.7 35.8 154.9 31.9 155.0 27.0 C155.2 20.2 147.3 2.8 154.0 -2.0 Z" fill="#56d680" stroke="#1d4d22" stroke-width="0.8"/><path d="M75.0 140.0 C76.8 139.5 80.3 141.2 81.0 144.0 C82.3 149.3 82.8 162.3 83.0 172.0 C83.2 181.7 82.8 194.3 82.0 202.0 C81.3 208.6 80.0 217.2 78.0 218.0 C76.0 218.8 71.2 212.3 70.0 207.0 C68.3 199.3 68.0 182.0 68.0 172.0 C68.0 162.0 68.8 152.3 70.0 147.0 C70.7 143.6 73.2 140.5 75.0 140.0 Z" fill="#56d680" stroke="#1d4d22" stroke-width="0.8"/><ellipse cx="112.0" cy="151.0" rx="7" ry="11" fill="#56d680" stroke="#1d4d22" stroke-width="0.8"/><path d="M66.0 230.0 C67.1 226.2 74.5 226.3 76.0 230.0 C77.5 233.7 76.3 247.5 75.0 252.0 C74.0 255.3 69.3 260.2 68.0 257.0 C66.5 253.3 64.7 234.5 66.0 230.0 Z" fill="#56d680" stroke="#1d4d22" stroke-width="0.8"/><path d="M686.0 296.4 C689.7 292.6 698.4 286.4 708.0 282.0 C718.3 277.3 738.2 270.9 747.6 268.4 C754.1 266.7 760.2 265.1 764.4 267.0 C768.6 268.9 769.7 274.7 773.0 279.6 C776.3 284.5 780.3 293.2 784.0 296.4 C787.4 299.4 794.1 296.2 795.0 299.0 C795.9 301.8 793.8 308.8 789.6 313.0 C785.4 317.2 776.1 319.2 770.0 324.4 C763.9 329.6 753.9 337.9 753.0 344.0 C752.1 350.1 760.2 355.8 764.4 361.0 C768.6 366.2 776.1 369.9 778.4 375.0 C780.7 380.1 780.7 387.8 778.4 391.7 C776.1 395.7 770.5 397.8 764.4 398.7 C758.3 399.6 746.7 396.3 742.0 397.0 C738.8 397.5 738.7 403.0 736.4 403.0 C734.1 403.0 731.5 399.2 728.0 397.0 C724.3 394.7 718.6 393.6 714.0 389.0 C709.3 384.3 703.3 375.6 700.0 369.0 C696.7 362.4 697.2 355.2 694.4 349.6 C691.6 344.0 684.1 339.8 683.2 335.6 C682.3 331.4 686.5 327.7 688.8 324.4 C691.1 321.1 697.5 319.3 697.0 316.0 C696.5 312.7 687.8 308.1 686.0 304.8 C684.4 301.9 683.7 298.8 686.0 296.4 Z" fill="#56d680" stroke="#1d4d22" stroke-width="0.8"/><path d="M647.0 388.0 C649.5 386.5 650.0 401.7 656.0 405.0 C662.0 408.3 673.9 405.5 683.0 408.0 C692.1 410.5 701.4 416.5 710.6 420.0 C719.8 423.5 731.9 425.5 738.0 429.0 C743.2 432.0 748.0 437.5 747.0 441.0 C746.0 444.5 737.6 447.5 732.0 450.0 C726.4 452.5 721.3 456.0 713.6 456.0 C705.9 456.0 695.1 450.5 686.0 450.0 C676.9 449.5 665.5 455.0 659.0 453.0 C652.5 451.0 650.0 444.5 647.0 438.0 C644.0 431.5 641.0 422.3 641.0 414.0 C641.0 405.7 644.5 389.5 647.0 388.0 Z" fill="#56d680" stroke="#1d4d22" stroke-width="0.8"/><path d="M492.0 390.0 C495.7 389.7 505.7 390.4 510.7 392.0 C515.7 393.6 517.4 397.8 522.0 399.7 C526.6 401.6 533.3 404.7 538.6 403.4 C543.9 402.1 550.5 395.4 553.6 392.0 C556.2 389.1 557.3 386.9 557.3 383.0 C557.3 379.0 553.9 373.7 553.6 368.0 C553.3 362.3 553.8 353.3 555.4 349.0 C556.8 345.1 559.9 342.9 563.0 342.0 C566.1 341.1 570.3 341.5 574.0 343.7 C577.7 345.9 581.6 351.3 585.0 355.0 C588.4 358.7 592.1 361.3 594.6 366.0 C597.1 370.7 598.1 378.0 600.0 383.0 C601.9 388.0 603.9 390.6 605.8 396.0 C607.8 401.6 608.6 409.5 612.0 416.5 C615.4 423.5 619.7 430.4 626.0 438.0 C632.3 445.6 643.5 456.2 650.0 462.0 C655.5 467.0 672.4 472.7 665.0 473.0 C612.0 474.8 387.5 477.2 332.0 473.0 C322.0 472.3 331.5 453.7 332.0 448.0 C332.3 444.2 333.5 442.5 335.0 439.0 C336.5 435.4 337.8 429.0 341.0 426.5 C344.2 424.0 350.8 422.6 354.0 424.0 C357.2 425.4 360.3 431.1 360.0 435.0 C359.7 438.9 351.7 444.7 352.0 447.5 C352.3 450.3 357.7 452.7 362.0 452.0 C366.8 451.2 375.0 445.8 381.0 443.0 C387.0 440.2 393.1 438.5 398.0 435.0 C402.9 431.5 405.1 424.0 410.7 422.0 C416.3 420.0 423.4 421.9 431.7 423.0 C440.1 424.1 455.3 427.7 461.0 428.6 C463.0 428.9 464.2 429.3 466.0 428.4 C469.3 426.7 479.0 423.0 480.6 418.6 C482.2 414.2 474.3 406.1 475.7 402.0 C477.1 397.9 486.1 396.0 488.8 394.0 C490.5 392.8 490.0 390.2 492.0 390.0 Z" fill="#92fd8e" stroke="#1d4d22" stroke-width="0.8"/><ellipse cx="535.0" cy="424.0" rx="13" ry="6" fill="#92ee8e" stroke="#1d4d22" stroke-width="0.8"/><path d="M767.0 428.0 C768.8 424.7 772.8 414.7 778.0 411.0 C783.2 407.3 790.0 408.1 798.0 406.0 C807.0 403.7 826.3 390.5 832.0 397.0 C837.7 403.5 836.7 435.2 832.0 445.0 C827.3 454.8 811.1 455.6 804.0 456.0 C797.4 456.4 795.1 451.4 789.6 447.7 C783.4 443.5 770.8 434.3 767.0 431.0 C766.1 430.2 766.4 429.1 767.0 428.0 Z" fill="#92fd8e" stroke="#1d4d22" stroke-width="0.8"/><path d="M190.5 106.0 C189.3 101.3 197.6 98.4 198.7 92.0 C199.9 85.5 196.3 72.9 197.5 66.7 C198.6 61.1 201.6 57.8 205.7 55.0 C209.8 52.2 218.5 51.6 222.0 50.0 C224.3 49.0 224.2 46.0 226.7 45.7 C229.8 45.4 236.8 48.6 240.7 48.0 C244.6 47.4 245.8 42.8 250.0 42.0 C254.2 41.2 261.7 40.1 266.0 43.0 C270.3 45.9 272.9 55.0 275.7 59.7 C278.4 64.3 279.2 68.0 282.7 71.0 C286.2 74.0 291.3 76.4 296.7 78.0 C302.1 79.6 309.6 78.7 315.0 80.7 C320.4 82.7 324.3 87.3 329.0 90.0 C333.7 92.7 340.2 101.7 343.0 97.0 C345.8 92.3 344.1 68.7 345.7 62.0 C346.5 58.7 349.3 57.0 352.7 57.0 C356.2 57.0 362.8 60.0 366.7 62.0 C370.6 64.0 372.3 66.2 376.0 69.0 C380.2 72.2 386.5 79.0 392.0 81.0 C397.5 83.0 404.3 80.3 409.0 81.0 C413.6 81.7 417.7 83.7 420.0 85.0 C421.7 86.0 423.0 87.0 423.0 89.0 C423.0 94.0 419.0 109.3 420.0 115.0 C420.8 119.7 425.5 119.7 429.0 123.0 C433.3 127.2 441.2 135.2 446.0 140.0 C450.8 144.8 459.0 149.2 458.0 152.0 C457.0 154.8 446.7 157.3 440.0 157.0 C433.3 156.7 425.0 150.5 418.0 150.0 C411.0 149.5 402.3 151.5 398.0 154.0 C393.7 156.5 396.0 162.0 392.0 165.0 C387.8 168.2 379.0 168.8 373.0 173.0 C367.0 177.2 361.2 186.2 356.0 190.0 C351.1 193.6 346.7 195.0 342.0 196.0 C337.3 197.0 332.7 196.5 328.0 196.0 C323.3 195.5 318.2 192.5 314.0 193.0 C309.8 193.5 305.8 195.7 303.0 199.0 C300.2 202.3 299.8 214.0 297.0 213.0 C294.2 212.0 288.3 201.0 286.0 193.0 C283.7 185.0 281.7 172.0 283.0 165.0 C284.3 158.0 289.8 154.7 294.0 151.0 C298.2 147.3 305.7 146.7 308.0 143.0 C310.3 139.3 311.7 131.0 308.0 129.0 C304.3 127.0 292.0 129.7 286.0 131.0 C280.1 132.3 277.8 135.2 272.0 137.0 C265.2 139.2 253.3 142.5 245.0 144.0 C236.7 145.5 228.5 146.0 222.0 146.0 C215.6 146.0 209.5 141.7 206.0 144.0 C202.5 146.3 202.3 159.5 201.0 160.0 C199.7 160.5 197.8 151.7 198.0 147.0 C198.2 142.3 200.7 136.5 202.0 132.0 C203.3 127.5 207.9 124.3 206.0 120.0 C204.1 115.7 191.7 110.7 190.5 106.0 Z" fill="#007300" stroke="#1d4d22" stroke-width="0.8"/><path d="M86.0 -2.0 C90.0 -6.5 99.3 -6.5 103.0 -2.0 C106.7 2.5 105.7 18.5 108.0 25.0 C110.0 30.6 115.3 32.3 117.0 37.0 C118.7 41.7 117.9 46.6 118.0 53.0 C118.2 62.7 121.0 85.2 118.0 95.0 C115.1 104.5 104.7 112.0 100.0 112.0 C95.3 112.0 91.4 102.8 90.0 95.0 C88.2 85.2 88.8 62.3 89.0 53.0 C89.1 47.3 92.7 43.7 91.0 39.0 C89.3 34.3 79.8 31.8 79.0 25.0 C78.2 18.2 82.0 2.5 86.0 -2.0 Z" fill="#007300" stroke="#1d4d22" stroke-width="0.8"/><path d="M418.0 -2.0 C438.2 -4.7 520.5 -3.3 541.0 -2.0 C544.2 -1.8 542.5 3.3 541.0 6.0 C539.5 8.7 530.7 10.8 532.0 14.0 C533.3 17.2 547.5 22.2 549.0 25.0 C550.5 27.8 544.9 31.7 541.0 31.0 C535.5 30.0 524.0 22.3 516.0 19.0 C508.0 15.7 497.3 10.5 493.0 11.0 C488.7 11.5 488.6 17.7 490.0 22.0 C491.5 26.7 501.0 33.8 502.0 39.0 C503.0 44.2 499.7 48.2 496.0 53.0 C491.3 59.0 480.0 69.3 474.0 75.0 C468.6 80.1 466.7 86.0 460.0 87.0 C453.3 88.0 441.0 84.8 434.0 81.0 C427.0 77.2 421.2 71.0 418.0 64.0 C414.8 57.0 414.7 47.3 415.0 39.0 C415.3 30.7 419.5 20.8 420.0 14.0 C420.5 7.6 411.6 -1.2 418.0 -2.0 Z" fill="#007300" stroke="#1d4d22" stroke-width="0.8"/><path d="M374.0 22.0 C375.7 20.3 378.5 19.3 380.0 21.0 C381.5 22.7 382.7 28.2 383.0 32.0 C383.3 35.8 383.0 41.0 382.0 44.0 C381.0 47.0 378.8 50.0 377.0 50.0 C375.2 50.0 372.3 47.0 371.0 44.0 C369.7 41.0 368.5 35.7 369.0 32.0 C369.5 28.3 372.2 23.8 374.0 22.0 Z" fill="#007300" stroke="#1d4d22" stroke-width="0.8"/><ellipse cx="60.0" cy="116.0" rx="3" ry="7" fill="#007300" stroke="#1d4d22" stroke-width="0.8"/><ellipse cx="24.0" cy="351.0" rx="5" ry="7" fill="#007300" stroke="#1d4d22" stroke-width="0.8"/><ellipse cx="28.0" cy="320.0" rx="3" ry="4" fill="#007300" stroke="#1d4d22" stroke-width="0.8"/><ellipse cx="242.0" cy="66.0" rx="6" ry="6" fill="#55a900" stroke="#1d4d22" stroke-width="0.8"/><ellipse cx="320.0" cy="36.0" rx="2" ry="2" fill="#007300" stroke="#1d4d22" stroke-width="0.8"/><ellipse cx="405.0" cy="32.5" rx="2.5" ry="2.5" fill="#007300" stroke="#1d4d22" stroke-width="0.8"/><ellipse cx="394.0" cy="45.0" rx="1.8" ry="1.8" fill="#007300" stroke="#1d4d22" stroke-width="0.8"/><ellipse cx="638.0" cy="79.0" rx="2" ry="2" fill="#007300" stroke="#1d4d22" stroke-width="0.8"/><path d="M0.0 -1.0 C1.7 -5.5 9.0 -2.8 12.0 -1.0 C15.0 0.8 16.8 6.5 18.0 10.0 C19.2 13.5 18.2 16.8 19.0 20.0 C19.8 23.2 23.2 26.3 23.0 29.0 C22.8 31.7 20.2 35.2 18.0 36.0 C15.8 36.8 12.7 35.7 10.0 34.0 C7.3 32.3 3.2 30.4 2.0 26.0 C0.3 20.2 -1.7 3.5 0.0 -1.0 Z" fill="#92ee8e" stroke="#1d4d22" stroke-width="0.8"/><ellipse cx="6.0" cy="6.0" rx="2.5" ry="4" fill="#92ee8e" transform="rotate(-15 6.0 6.0)" stroke="#1d4d22" stroke-width="0.8"/><path d="M136.0 250.0 C141.2 251.2 154.3 256.3 153.0 264.0 C151.7 271.7 135.0 286.3 128.0 296.0 C121.0 305.7 116.2 315.0 111.0 322.0 C105.9 328.8 102.2 335.3 97.0 338.0 C91.8 340.7 82.3 341.7 80.0 338.0 C77.7 334.3 79.3 324.1 83.0 316.0 C88.2 304.8 104.5 280.8 111.0 271.0 C114.9 265.1 117.8 260.5 122.0 257.0 C126.2 253.5 130.8 248.8 136.0 250.0 Z" fill="#92ee8e" stroke="#1d4d22" stroke-width="0.8"/><ellipse cx="100.0" cy="290.0" rx="2.5" ry="3.5" fill="#92ee8e" transform="rotate(30 100.0 290.0)" stroke="#1d4d22" stroke-width="0.8"/><ellipse cx="95.0" cy="304.0" rx="2.5" ry="3" fill="#92ee8e" transform="rotate(30 95.0 304.0)" stroke="#1d4d22" stroke-width="0.8"/><ellipse cx="75.0" cy="322.0" rx="5" ry="5" fill="#56d680" stroke="#1d4d22" stroke-width="0.8"/><ellipse cx="75.0" cy="322.0" rx="2.5" ry="2.5" fill="#56d680" stroke="#1d4d22" stroke-width="0.8"/><path d="M71.0 354.0 C71.8 350.8 78.1 348.8 79.0 352.0 C80.8 358.3 81.3 376.0 82.0 392.0 C82.8 412.2 86.7 459.5 84.0 473.0 C82.6 480.1 67.3 480.1 66.0 473.0 C63.5 459.5 68.2 411.8 69.0 392.0 C69.6 376.8 69.3 360.7 71.0 354.0 Z" fill="#92ee8e" stroke="#1d4d22" stroke-width="0.8"/><path d="M74.0 382.0 C74.1 380.8 76.9 380.8 77.0 382.0 C77.8 388.7 78.5 406.8 79.0 422.0 C79.5 437.2 81.3 464.5 80.0 473.0 C79.4 476.6 71.6 476.6 71.0 473.0 C69.7 464.5 71.5 437.2 72.0 422.0 C72.5 406.8 73.2 388.7 74.0 382.0 Z" fill="#92fd8e" stroke="#1d4d22" stroke-width="0.8"/><path d="M674.0 212.0 C675.0 207.7 677.8 202.3 680.0 201.0 C682.2 199.7 685.6 201.3 687.0 204.0 C688.8 207.5 691.5 217.8 691.0 222.0 C690.5 225.9 686.8 228.2 684.0 229.0 C681.2 229.8 675.7 229.8 674.0 227.0 C672.3 224.2 673.0 216.3 674.0 212.0 Z" fill="#92fd8e" stroke="#1d4d22" stroke-width="0.8"/><path d="M418.0 294.0 C419.0 292.3 421.3 290.7 423.0 292.0 C424.7 293.3 426.2 299.2 428.0 302.0 C429.8 304.8 432.7 306.7 434.0 309.0 C435.3 311.3 437.0 314.7 436.0 316.0 C435.0 317.3 430.7 318.0 428.0 317.0 C425.3 316.0 421.8 312.5 420.0 310.0 C418.2 307.5 417.3 304.7 417.0 302.0 C416.7 299.3 417.0 295.7 418.0 294.0 Z" fill="#92fd8e" stroke="#1d4d22" stroke-width="0.8"/><ellipse cx="281.0" cy="254.0" rx="4.5" ry="7" fill="#56d680" stroke="#1d4d22" stroke-width="0.8"/><ellipse cx="295.0" cy="258.0" rx="3" ry="4" fill="#56d680" stroke="#1d4d22" stroke-width="0.8"/><ellipse cx="290.0" cy="269.0" rx="4" ry="6" fill="#56d680" transform="rotate(-20 290.0 269.0)" stroke="#1d4d22" stroke-width="0.8"/><ellipse cx="359.0" cy="322.0" rx="3" ry="3" fill="#92fd8e" stroke="#1d4d22" stroke-width="0.8"/><path d="M574.0 189.0 C575.8 185.3 579.7 183.2 584.0 182.0 C588.3 180.8 595.8 180.3 600.0 182.0 C604.2 183.7 606.2 188.7 609.0 192.0 C611.8 195.3 614.0 199.5 617.0 202.0 C620.0 204.5 624.3 204.5 627.0 207.0 C629.7 209.5 633.0 213.7 633.0 217.0 C633.0 220.3 630.0 225.3 627.0 227.0 C624.0 228.7 618.3 228.3 615.0 227.0 C611.7 225.7 610.0 220.8 607.0 219.0 C604.0 217.2 601.1 216.8 597.0 216.0 C592.8 215.2 586.0 216.0 582.0 214.0 C578.0 212.0 574.3 208.2 573.0 204.0 C571.7 199.8 572.2 192.7 574.0 189.0 Z" fill="#92fd8e" stroke="#1d4d22" stroke-width="0.8"/><ellipse cx="591.0" cy="199.0" rx="13" ry="11" fill="#a8f0a8" stroke="#1d4d22" stroke-width="0.8"/><ellipse cx="591.0" cy="199.0" rx="10" ry="8.5" fill="#3280f8" stroke="#223a8a" stroke-width="0.8"/><ellipse cx="591.0" cy="199.0" rx="4" ry="4" fill="#22aaf2"/><ellipse cx="575.8" cy="398.0" rx="10" ry="9" fill="#3280f8" stroke="#223a8a" stroke-width="0.8"/><path d="M514.0 447.0 C515.2 443.5 521.5 441.5 527.0 441.0 C532.5 440.5 542.0 442.2 547.0 444.0 C551.8 445.8 554.5 447.5 557.0 452.0 C559.7 456.8 567.2 469.5 563.0 473.0 C558.8 476.5 539.2 474.8 532.0 473.0 C525.7 471.4 523.0 466.3 520.0 462.0 C517.0 457.7 512.8 450.5 514.0 447.0 Z" fill="#3280f8" stroke="#223a8a" stroke-width="0.8"/><path d="M583.0 450.0 C585.5 447.5 599.4 445.0 604.5 444.0 C608.1 443.3 611.6 443.0 613.6 444.0 C615.6 445.0 617.6 448.0 616.6 450.0 C615.6 452.0 606.0 453.5 607.6 456.0 C609.2 458.5 621.9 462.2 626.0 465.0 C629.3 467.3 635.9 472.0 632.0 473.0 C626.8 474.3 602.1 475.3 595.0 473.0 C589.3 471.1 591.4 462.8 589.4 459.0 C587.4 455.2 580.5 452.5 583.0 450.0 Z" fill="#3280f8" stroke="#223a8a" stroke-width="0.8"/><path d="M392.0 473.0 C386.8 471.6 395.8 464.5 400.0 462.0 C404.2 459.5 412.0 458.0 417.0 458.0 C422.0 458.0 426.2 459.5 430.0 462.0 C433.8 464.5 445.7 471.3 440.0 473.0 C433.7 474.8 398.7 474.8 392.0 473.0 Z" fill="#3280f8" stroke="#223a8a" stroke-width="0.8"/><ellipse cx="343.0" cy="467.0" rx="3" ry="4" fill="#3280f8"/><path d="M212.5 106.4 C216.8 103.9 227.3 96.1 238.2 91.0 C249.8 85.7 269.4 74.4 281.8 74.4 C294.2 74.4 302.8 86.8 312.6 91.0 C322.5 95.3 331.0 101.3 340.9 100.0 C350.7 98.7 362.7 85.9 371.7 83.3 C380.6 80.8 386.2 85.0 394.8 84.6 C403.3 84.2 418.3 81.4 423.0 80.8" fill="none" stroke="#3aa8c0" stroke-width="0.8" stroke-linejoin="round"/><path d="M294.7 79.5 C295.5 82.3 298.1 90.0 299.8 96.2 C301.5 102.4 300.7 114.6 304.9 116.7 C309.2 118.8 321.2 108.1 325.5 109.0 C329.7 109.9 329.7 119.7 330.6 121.8" fill="none" stroke="#3aa8c0" stroke-width="0.8" stroke-linejoin="round"/><path d="M217.7 109.0 C219.4 114.1 225.8 133.8 227.9 139.8 C228.7 142.0 230.1 144.1 230.5 144.9" fill="none" stroke="#3aa8c0" stroke-width="0.8" stroke-linejoin="round"/><path d="M243.3 134.7 C247.6 132.1 260.4 121.0 269.0 119.3 C277.6 117.6 287.4 121.8 294.7 124.4 C301.9 127.0 305.8 132.1 312.6 134.7 C319.5 137.2 330.2 140.7 335.7 139.8 C341.3 138.9 341.4 133.1 346.0 129.5 C352.0 124.8 364.0 116.7 371.7 111.6 C379.4 106.4 386.6 103.4 392.2 98.7 C397.8 94.0 402.9 85.9 405.0 83.3" fill="none" stroke="#3aa8c0" stroke-width="0.8" stroke-linejoin="round"/><path d="M335.7 139.8 C336.6 145.8 341.7 165.9 340.9 175.7 C340.0 185.6 332.3 195.0 330.6 198.8" fill="none" stroke="#3aa8c0" stroke-width="0.8" stroke-linejoin="round"/><path d="M356.3 150.1 C355.8 154.3 355.4 168.0 353.7 175.7 C352.0 183.4 347.3 192.8 346.0 196.3" fill="none" stroke="#3aa8c0" stroke-width="0.8" stroke-linejoin="round"/><path d="M371.7 144.9 C375.9 144.5 388.8 141.5 397.3 142.4 C405.9 143.2 414.5 148.8 423.0 150.1 C431.6 151.4 444.4 150.1 448.7 150.1" fill="none" stroke="#3aa8c0" stroke-width="0.8" stroke-linejoin="round"/><path d="M307.5 152.6 C305.4 158.2 297.2 177.9 294.7 186.0 C292.8 192.0 292.5 198.8 292.1 201.4" fill="none" stroke="#3aa8c0" stroke-width="0.8" stroke-linejoin="round"/><path d="M230.5 144.9 C228.4 148.4 224.1 158.6 217.7 165.5 C211.3 172.3 196.3 182.6 192.0 186.0" fill="none" stroke="#3aa8c0" stroke-width="0.8" stroke-linejoin="round"/><path d="M269.0 211.7 C266.0 215.9 254.0 233.1 251.0 237.3" fill="none" stroke="#3aa8c0" stroke-width="0.8" stroke-linejoin="round"/><path d="M340.9 216.8 C340.0 222.7 336.6 246.1 335.7 252.0" fill="none" stroke="#3aa8c0" stroke-width="0.8" stroke-linejoin="round"/><path d="M356.3 211.7 C361.0 210.0 373.4 204.0 384.5 201.4 C395.6 198.8 408.4 198.0 423.0 196.3 C437.6 194.6 463.9 192.0 472.0 191.1" fill="none" stroke="#3aa8c0" stroke-width="0.8" stroke-linejoin="round"/><path d="M592.0 87.0 C594.9 93.7 604.5 114.1 609.5 127.0 C614.5 139.9 618.2 152.0 622.0 164.5 C625.8 177.0 629.9 187.4 632.0 202.0 C634.1 216.6 634.1 243.7 634.5 252.0" fill="none" stroke="#3aa8c0" stroke-width="0.8" stroke-linejoin="round"/><path d="M637.0 72.0 C638.7 77.0 643.7 90.8 647.0 102.0 C650.3 113.2 652.8 127.0 657.0 139.5 C661.2 152.0 667.4 164.5 672.0 177.0 C676.6 189.5 680.3 202.0 684.5 214.5 C688.7 227.0 694.9 245.8 697.0 252.0" fill="none" stroke="#3aa8c0" stroke-width="0.8" stroke-linejoin="round"/><path d="M692.0 77.0 C693.7 83.7 701.2 104.5 702.0 117.0 C702.8 129.5 695.8 139.9 697.0 152.0 C698.2 164.1 705.3 177.0 709.5 189.5 C713.7 202.0 719.9 220.8 722.0 227.0" fill="none" stroke="#3aa8c0" stroke-width="0.8" stroke-linejoin="round"/><path d="M547.0 72.0 C544.9 77.0 538.7 92.8 534.5 102.0 C530.3 111.2 530.3 120.8 522.0 127.0 C513.7 133.2 490.8 137.4 484.5 139.5" fill="none" stroke="#3aa8c0" stroke-width="0.8" stroke-linejoin="round"/><path d="M472.0 177.0 C478.2 179.5 497.0 187.0 509.5 192.0 C522.0 197.0 535.8 201.2 547.0 207.0 C558.2 212.8 563.4 222.3 577.0 227.0 C591.6 232.0 624.9 235.3 634.5 237.0" fill="none" stroke="#3aa8c0" stroke-width="0.8" stroke-linejoin="round"/><path d="M672.0 127.0 C672.8 131.2 674.1 142.8 677.0 152.0 C679.9 161.2 687.4 177.0 689.5 182.0" fill="none" stroke="#3aa8c0" stroke-width="0.8" stroke-linejoin="round"/><path d="M734.5 207.0 C736.6 210.3 744.9 223.7 747.0 227.0" fill="none" stroke="#3aa8c0" stroke-width="0.8" stroke-linejoin="round"/><path d="M166.0 232.0 C165.4 237.8 163.7 255.3 162.5 267.0 C161.3 278.7 158.4 290.3 159.0 302.0 C159.6 313.7 161.3 324.2 166.0 337.0 C170.7 349.8 180.6 365.0 187.0 379.0 C193.4 393.0 201.6 414.0 204.5 421.0" fill="none" stroke="#3aa8c0" stroke-width="0.8" stroke-linejoin="round"/><path d="M134.5 232.0 C133.9 240.8 129.3 267.0 131.0 284.5 C132.8 302.0 138.6 322.4 145.0 337.0 C151.4 351.6 161.3 362.7 169.5 372.0 C177.7 381.3 189.9 389.5 194.0 393.0" fill="none" stroke="#3aa8c0" stroke-width="0.8" stroke-linejoin="round"/><path d="M243.0 295.0 C240.7 302.0 232.5 324.2 229.0 337.0 C225.5 349.8 225.5 361.5 222.0 372.0 C218.5 382.5 210.9 391.8 208.0 400.0 C205.1 408.0 205.1 417.5 204.5 421.0" fill="none" stroke="#3aa8c0" stroke-width="0.8" stroke-linejoin="round"/><path d="M292.0 302.0 C289.1 307.8 279.2 324.2 274.5 337.0 C269.8 349.8 262.3 366.2 264.0 379.0 C265.8 391.8 281.5 408.2 285.0 414.0" fill="none" stroke="#3aa8c0" stroke-width="0.8" stroke-linejoin="round"/><path d="M78.5 337.0 C84.9 337.0 103.6 332.3 117.0 337.0 C130.4 341.7 146.2 357.4 159.0 365.0 C171.8 372.6 188.2 379.6 194.0 382.5" fill="none" stroke="#3aa8c0" stroke-width="0.8" stroke-linejoin="round"/><path d="M257.0 260.0 C258.2 267.0 264.6 289.2 264.0 302.0 C263.4 314.8 255.3 331.2 253.5 337.0" fill="none" stroke="#3aa8c0" stroke-width="0.8" stroke-linejoin="round"/><path d="M327.0 267.0 C324.1 275.8 315.3 304.9 309.5 319.5 C303.7 334.0 294.9 348.7 292.0 354.5" fill="none" stroke="#3aa8c0" stroke-width="0.8" stroke-linejoin="round"/><path d="M362.0 267.0 C359.7 275.8 352.1 305.5 348.0 319.5 C344.3 332.3 339.3 345.8 337.5 351.0" fill="none" stroke="#3aa8c0" stroke-width="0.8" stroke-linejoin="round"/><path d="M397.0 249.5 C394.1 258.3 380.7 287.4 379.5 302.0 C378.4 316.6 388.3 331.2 390.0 337.0" fill="none" stroke="#3aa8c0" stroke-width="0.8" stroke-linejoin="round"/><path d="M47.0 232.0 C48.8 240.8 53.4 267.0 57.5 284.5 C61.6 302.0 69.2 328.3 71.5 337.0" fill="none" stroke="#3aa8c0" stroke-width="0.8" stroke-linejoin="round"/><ellipse cx="245.9" cy="114.1" rx="2.6" ry="2.0" fill="#e2a84a"/><ellipse cx="260.0" cy="119.3" rx="2.6" ry="2.0" fill="#e2a84a"/><ellipse cx="287.0" cy="119.3" rx="2.6" ry="2.0" fill="#e2a84a"/><ellipse cx="289.5" cy="73.1" rx="2.6" ry="2.0" fill="#e2a84a"/><ellipse cx="289.5" cy="101.3" rx="2.6" ry="2.0" fill="#e2a84a"/><ellipse cx="227.9" cy="142.4" rx="2.6" ry="2.0" fill="#e2a84a"/><ellipse cx="245.9" cy="139.8" rx="2.6" ry="2.0" fill="#e2a84a"/><ellipse cx="358.8" cy="119.3" rx="2.6" ry="2.0" fill="#e2a84a"/><ellipse cx="358.8" cy="147.5" rx="2.6" ry="2.0" fill="#e2a84a"/><ellipse cx="402.5" cy="144.9" rx="2.6" ry="2.0" fill="#e2a84a"/><ellipse cx="207.4" cy="175.7" rx="2.6" ry="2.0" fill="#e2a84a"/><ellipse cx="269.0" cy="211.7" rx="2.6" ry="2.0" fill="#e2a84a"/><ellipse cx="340.9" cy="219.4" rx="2.6" ry="2.0" fill="#e2a84a"/><ellipse cx="289.5" cy="221.9" rx="2.6" ry="2.0" fill="#e2a84a"/><ellipse cx="407.6" cy="204.0" rx="2.6" ry="2.0" fill="#e2a84a"/><ellipse cx="351.1" cy="186.0" rx="2.6" ry="2.0" fill="#e2a84a"/><ellipse cx="235.6" cy="242.5" rx="2.6" ry="2.0" fill="#e2a84a"/><ellipse cx="297.2" cy="59.0" rx="2.6" ry="2.0" fill="#e2a84a"/><ellipse cx="622.0" cy="87.0" rx="2.6" ry="2.0" fill="#e2a84a"/><ellipse cx="659.5" cy="84.5" rx="2.6" ry="2.0" fill="#e2a84a"/><ellipse cx="672.0" cy="104.5" rx="2.6" ry="2.0" fill="#e2a84a"/><ellipse cx="599.5" cy="132.0" rx="2.6" ry="2.0" fill="#e2a84a"/><ellipse cx="622.0" cy="152.0" rx="2.6" ry="2.0" fill="#e2a84a"/><ellipse cx="529.5" cy="169.5" rx="2.6" ry="2.0" fill="#e2a84a"/><ellipse cx="492.0" cy="147.0" rx="2.6" ry="2.0" fill="#e2a84a"/><ellipse cx="527.0" cy="227.0" rx="2.6" ry="2.0" fill="#e2a84a"/><ellipse cx="679.5" cy="172.0" rx="2.6" ry="2.0" fill="#e2a84a"/><ellipse cx="707.0" cy="159.5" rx="2.6" ry="2.0" fill="#e2a84a"/><ellipse cx="712.0" cy="199.5" rx="2.6" ry="2.0" fill="#e2a84a"/><ellipse cx="622.0" cy="212.0" rx="2.6" ry="2.0" fill="#e2a84a"/><ellipse cx="742.0" cy="147.0" rx="2.6" ry="2.0" fill="#e2a84a"/><ellipse cx="617.0" cy="232.0" rx="2.6" ry="2.0" fill="#e2a84a"/><ellipse cx="55.8" cy="284.5" rx="2.6" ry="2.0" fill="#e2a84a"/><ellipse cx="64.5" cy="337.0" rx="2.6" ry="2.0" fill="#e2a84a"/><ellipse cx="75.0" cy="344.0" rx="2.6" ry="2.0" fill="#e2a84a"/><ellipse cx="82.0" cy="333.5" rx="2.6" ry="2.0" fill="#e2a84a"/><ellipse cx="87.3" cy="312.5" rx="2.6" ry="2.0" fill="#e2a84a"/><ellipse cx="132.8" cy="298.5" rx="2.6" ry="2.0" fill="#e2a84a"/><ellipse cx="152.0" cy="333.5" rx="2.6" ry="2.0" fill="#e2a84a"/><ellipse cx="171.3" cy="342.3" rx="2.6" ry="2.0" fill="#e2a84a"/><ellipse cx="197.5" cy="312.5" rx="2.6" ry="2.0" fill="#e2a84a"/><ellipse cx="202.8" cy="317.8" rx="2.6" ry="2.0" fill="#e2a84a"/><ellipse cx="215.0" cy="354.5" rx="2.6" ry="2.0" fill="#e2a84a"/><ellipse cx="211.5" cy="375.5" rx="2.6" ry="2.0" fill="#e2a84a"/><ellipse cx="187.0" cy="393.0" rx="2.6" ry="2.0" fill="#e2a84a"/><ellipse cx="136.3" cy="375.5" rx="2.6" ry="2.0" fill="#e2a84a"/><ellipse cx="271.0" cy="326.5" rx="2.6" ry="2.0" fill="#e2a84a"/><ellipse cx="281.5" cy="333.5" rx="2.6" ry="2.0" fill="#e2a84a"/><ellipse cx="236.0" cy="242.5" rx="2.6" ry="2.0" fill="#e2a84a"/><ellipse cx="302.5" cy="249.5" rx="2.6" ry="2.0" fill="#e2a84a"/><ellipse cx="309.5" cy="277.5" rx="2.6" ry="2.0" fill="#e2a84a"/><ellipse cx="341.0" cy="253.0" rx="2.6" ry="2.0" fill="#e2a84a"/><ellipse cx="379.5" cy="256.5" rx="2.6" ry="2.0" fill="#e2a84a"/><ellipse cx="393.5" cy="253.0" rx="2.6" ry="2.0" fill="#e2a84a"/><ellipse cx="411.0" cy="300.3" rx="2.6" ry="2.0" fill="#e2a84a"/><ellipse cx="372.5" cy="326.5" rx="2.6" ry="2.0" fill="#e2a84a"/><ellipse cx="162.5" cy="284.5" rx="2.6" ry="2.0" fill="#e2a84a"/><ellipse cx="208.0" cy="256.5" rx="2.6" ry="2.0" fill="#e2a84a"/><ellipse cx="243.0" cy="291.5" rx="2.6" ry="2.0" fill="#e2a84a"/><ellipse cx="285.0" cy="414.0" rx="2.6" ry="2.0" fill="#e2a84a"/><ellipse cx="62.0" cy="342.0" rx="2.8" ry="2.2" fill="#e3b158"/><ellipse cx="68.0" cy="347.0" rx="2.8" ry="2.2" fill="#e3b158"/><ellipse cx="73.0" cy="337.0" rx="2.8" ry="2.2" fill="#e3b158"/><ellipse cx="77.0" cy="344.0" rx="2.8" ry="2.2" fill="#e3b158"/><ellipse cx="70.0" cy="354.0" rx="2.8" ry="2.2" fill="#e3b158"/><ellipse cx="80.0" cy="352.0" rx="2.8" ry="2.2" fill="#e3b158"/><ellipse cx="58.0" cy="335.0" rx="2.8" ry="2.2" fill="#e3b158"/><ellipse cx="84.0" cy="360.0" rx="2.8" ry="2.2" fill="#e3b158"/><ellipse cx="65.0" cy="329.0" rx="2.8" ry="2.2" fill="#e3b158"/><ellipse cx="620.0" cy="207.0" rx="2.8" ry="2.2" fill="#e3b158"/><ellipse cx="624.0" cy="214.0" rx="2.8" ry="2.2" fill="#e3b158"/><ellipse cx="617.0" cy="220.0" rx="2.8" ry="2.2" fill="#e3b158"/><ellipse cx="627.0" cy="222.0" rx="2.8" ry="2.2" fill="#e3b158"/><ellipse cx="612.0" cy="212.0" rx="2.8" ry="2.2" fill="#e3b158"/><ellipse cx="324.0" cy="126.0" rx="2.8" ry="2.2" fill="#e3b158"/><ellipse cx="329.0" cy="132.0" rx="2.8" ry="2.2" fill="#e3b158"/><ellipse cx="320.0" cy="138.0" rx="2.8" ry="2.2" fill="#e3b158"/><ellipse cx="264.0" cy="112.0" rx="2.8" ry="2.2" fill="#e3b158"/><ellipse cx="268.0" cy="118.0" rx="2.8" ry="2.2" fill="#e3b158"/><ellipse cx="292.0" cy="122.0" rx="2.8" ry="2.2" fill="#e3b158"/><ellipse cx="288.0" cy="129.0" rx="2.8" ry="2.2" fill="#e3b158"/><ellipse cx="418.0" cy="160.0" rx="2.8" ry="2.2" fill="#e3b158"/><ellipse cx="423.0" cy="165.0" rx="2.8" ry="2.2" fill="#e3b158"/><ellipse cx="472.0" cy="250.0" rx="2.8" ry="2.2" fill="#e3b158"/><ellipse cx="476.0" cy="255.0" rx="2.8" ry="2.2" fill="#e3b158"/><ellipse cx="412.0" cy="270.0" rx="2.8" ry="2.2" fill="#e3b158"/><ellipse cx="240.0" cy="195.0" rx="2.8" ry="2.2" fill="#e3b158"/><ellipse cx="245.0" cy="201.0" rx="2.8" ry="2.2" fill="#e3b158"/><path d="M263.0 -2.0 C263.9 0.8 264.3 10.6 268.7 15.0 C273.2 19.4 285.0 18.4 289.7 24.7 C294.4 31.0 294.8 47.3 296.7 52.7 C297.5 55.0 298.8 56.0 301.0 57.0 C303.7 58.2 310.6 55.7 313.0 59.7 C315.4 63.6 312.6 77.6 315.3 80.7 C318.0 83.7 323.9 78.5 329.0 78.0 C334.1 77.5 342.2 81.8 345.7 78.0 C349.3 74.2 346.8 60.0 350.3 55.0 C353.8 50.0 362.0 51.3 366.7 48.0 C371.4 44.7 375.2 36.2 378.3 35.0 C381.4 33.8 383.4 37.8 385.3 41.0 C388.0 45.5 391.6 57.3 394.7 62.0 C397.3 65.9 402.4 66.7 404.0 69.0 C405.5 71.3 401.4 75.0 404.0 76.0 C407.1 77.2 419.2 71.3 422.7 76.0 C426.2 80.7 425.0 97.4 425.0 104.0 C425.0 108.8 421.2 113.9 422.7 115.7 C424.2 117.5 429.6 115.9 434.0 115.0 C439.2 113.9 448.8 108.2 454.0 109.0 C459.2 109.8 461.7 122.8 465.0 120.0 C468.3 117.2 470.7 98.0 474.0 92.0 C476.6 87.2 481.3 87.2 485.0 84.0 C488.7 80.8 490.0 74.7 496.0 73.0 C502.5 71.2 516.0 73.5 524.0 73.0 C532.0 72.5 539.7 69.2 544.0 70.0 C547.9 70.8 546.7 75.7 550.0 78.0 C555.2 81.7 568.0 93.8 575.0 92.0 C582.0 90.2 584.5 72.8 592.0 67.0 C599.5 61.2 611.7 57.7 620.0 57.0 C628.3 56.3 634.0 63.0 642.0 63.0 C650.0 63.0 660.0 55.7 668.0 57.0 C676.0 58.3 683.0 68.2 690.0 71.0 C697.0 73.8 704.3 69.0 710.0 74.0 C715.7 79.0 718.7 95.6 724.0 101.0 C729.3 106.4 736.3 104.2 742.0 106.5 C747.7 108.8 752.5 112.7 758.0 114.6 C763.5 116.5 768.7 116.6 774.7 118.0 C780.7 119.4 788.6 121.9 794.0 123.0 C799.1 124.0 802.6 123.7 807.0 124.5 C811.4 125.3 816.2 126.9 820.4 127.7 C824.6 128.4 830.1 128.8 832.0 129.0" fill="none" stroke="#111" stroke-width="1.35" stroke-linejoin="round"/><path d="M314.0 57.0 C311.5 57.0 305.0 56.4 299.0 57.0 C293.0 57.6 284.6 60.2 278.0 60.8 C271.4 61.4 265.5 56.8 259.3 60.8 C253.1 64.8 248.5 77.8 240.7 85.0 C232.9 92.2 218.5 98.5 212.7 104.0 C208.1 108.3 207.6 112.0 205.7 118.0 C203.8 124.2 202.6 134.0 201.0 141.0 C199.4 148.0 200.2 156.1 196.3 160.0 C192.4 163.9 181.6 162.7 177.7 164.7 C174.6 166.3 174.8 170.1 173.0 172.0 C171.2 173.9 169.3 174.2 167.0 176.0 C164.2 178.2 160.4 181.4 156.0 185.0 C150.3 189.7 139.5 200.5 133.0 204.0 C127.3 207.1 122.0 206.5 117.0 206.0 C112.0 205.5 108.7 202.8 103.0 201.0 C96.8 199.0 86.2 193.5 80.0 194.0 C73.8 194.5 70.2 198.5 66.0 204.0 C61.8 209.5 58.6 222.3 55.0 227.0 C52.2 230.7 46.1 227.6 44.5 232.0 C40.5 243.0 32.0 280.3 31.0 293.0 C30.5 299.7 35.6 302.0 38.4 308.0 C41.1 314.0 43.4 321.5 47.5 329.0 C51.6 336.5 60.4 346.9 63.0 353.0 C65.0 357.6 60.5 362.4 63.0 365.5 C65.5 368.6 73.5 370.1 78.0 371.6 C82.5 373.1 85.7 372.2 90.0 374.6 C95.5 377.7 104.4 384.4 111.0 390.0 C117.6 395.6 123.9 403.5 129.5 408.0 C135.0 412.4 139.0 413.7 144.6 417.0 C150.2 420.3 154.9 426.4 163.0 427.7 C171.1 429.0 184.8 424.8 193.0 424.7 C200.7 424.6 205.9 426.3 212.0 427.0 C218.1 427.7 222.9 429.7 229.5 429.0 C236.1 428.3 246.8 423.5 251.7 422.8 C254.6 422.4 256.0 425.1 258.7 425.0 C261.4 424.9 264.3 422.3 268.0 422.0 C271.7 421.7 277.7 423.6 280.8 423.0 C283.7 422.5 285.0 420.6 286.7 418.7 C288.5 416.8 288.6 413.1 291.3 411.7 C294.0 410.3 300.6 411.1 303.0 410.5 C304.3 410.1 306.2 409.2 305.4 408.0 C304.2 406.2 297.9 402.5 296.0 400.0 C294.2 397.7 294.0 395.9 293.7 393.0 C293.3 389.3 292.4 382.9 293.7 378.0 C295.0 373.1 295.7 366.8 301.4 363.4 C307.2 359.9 319.6 357.7 328.7 357.0 C337.8 356.3 349.7 359.7 356.0 359.0 C360.8 358.5 361.8 354.1 366.5 353.0 C372.1 351.6 384.7 355.0 389.6 350.8 C394.5 346.6 392.5 333.0 396.0 327.7 C399.5 322.5 404.8 318.2 410.7 319.3 C416.7 320.3 425.4 330.5 431.7 334.0 C438.0 337.5 443.6 340.6 448.5 340.3 C453.4 340.0 457.1 334.1 461.0 332.0 C464.9 329.9 468.7 329.2 472.0 327.7 C475.3 326.2 477.8 325.5 481.0 323.0 C485.1 319.7 491.4 314.6 496.5 308.0 C501.6 301.4 506.6 292.8 511.7 283.6 C516.8 274.4 521.5 258.6 527.0 253.0 C532.1 247.8 540.8 251.5 545.0 250.0 C548.5 248.8 548.5 245.0 552.0 244.0 C556.3 242.8 564.8 241.1 571.0 242.6 C577.2 244.1 582.4 250.4 589.0 253.0 C595.6 255.6 603.4 259.2 610.6 258.0 C617.8 256.8 625.4 248.9 632.0 245.6 C638.6 242.3 643.5 237.3 650.0 238.0 C656.5 238.7 666.0 245.5 671.0 250.0 C676.0 254.5 675.9 259.4 680.0 265.0 C684.1 270.6 690.9 280.9 695.5 283.5 C699.8 285.9 702.8 282.0 707.6 280.5 C712.7 278.9 719.4 275.8 726.0 274.0 C732.6 272.2 741.0 271.2 747.0 270.0 C753.0 268.8 758.0 265.8 762.0 267.0 C766.0 268.2 767.5 273.2 771.0 277.5 C775.0 282.5 779.9 292.9 786.0 297.0 C792.1 301.1 802.5 297.7 807.6 302.0 C812.7 306.3 812.5 319.0 816.6 323.0 C820.7 327.0 829.4 325.5 832.0 326.0" fill="none" stroke="#111" stroke-width="1.35" stroke-linejoin="round"/><path d="M794.0 123.0 C793.5 126.3 793.3 136.0 791.0 143.0 C788.7 150.0 782.8 156.7 780.0 165.0 C777.2 173.3 777.8 183.7 774.0 193.0 C770.2 202.3 761.2 213.7 757.0 221.0 C753.5 227.2 750.2 229.9 749.0 237.0 C747.6 245.2 748.6 264.5 748.5 270.0" fill="none" stroke="#111" stroke-width="1.35" stroke-linejoin="round"/><path d="M78.0 371.6 C76.0 374.6 68.7 383.7 65.7 389.8 C62.6 395.9 60.2 401.0 59.7 408.0 C59.2 415.0 67.8 426.5 62.7 432.0 C57.6 437.5 36.6 439.5 29.0 441.0 C24.3 441.9 21.3 443.1 17.0 441.0 C11.8 438.5 1.2 428.5 -2.0 426.0" fill="none" stroke="#111" stroke-width="1.35" stroke-linejoin="round"/><path d="M-2.0 450.0 C-0.3 452.6 5.7 461.8 8.0 465.6 C9.7 468.5 11.3 471.8 12.0 473.0" fill="none" stroke="#111" stroke-width="1.35" stroke-linejoin="round"/><path d="M832.0 392.6 C826.4 393.1 808.2 392.0 798.5 395.6 C788.8 399.2 780.1 406.9 774.0 414.0 C767.9 421.1 766.5 432.0 762.0 438.0 C757.5 444.0 750.0 444.2 747.0 450.0 C744.0 455.8 744.5 469.2 744.0 473.0" fill="none" stroke="#111" stroke-width="1.35" stroke-linejoin="round"/><path d="M-2.0 213.0 C0.5 214.3 6.8 219.2 13.0 221.0 C19.2 222.8 29.8 222.2 35.0 224.0 C39.7 225.6 42.9 230.7 44.5 232.0" fill="none" stroke="#111" stroke-width="1.35" stroke-linejoin="round"/><path d="M814.0 -2.0 C812.3 1.9 805.7 14.8 804.0 21.5 C802.4 27.9 802.7 32.6 804.0 38.0 C805.3 43.4 809.6 47.3 812.0 54.0 C814.5 60.8 818.5 70.2 818.8 78.7 C819.1 87.2 814.3 100.1 814.0 105.0 C813.9 106.7 816.6 106.4 817.0 108.0 C818.0 111.7 819.5 123.8 820.0 127.0" fill="none" stroke="#111" stroke-width="1.3" stroke-linejoin="round"/><rect x="146.0" y="17.0" width="14" height="12" fill="#e8f4dc" opacity="0.9"/><text x="153.0" y="26.0" font-family="Liberation Serif" font-size="9" fill="#333" text-anchor="middle">15</text><rect x="609.0" y="12.0" width="14" height="12" fill="#e8f4dc" opacity="0.9"/><text x="616.0" y="21.0" font-family="Liberation Serif" font-size="9" fill="#333" text-anchor="middle">15</text><rect x="406.0" y="40.0" width="14" height="12" fill="#e8f4dc" opacity="0.9"/><text x="413.0" y="49.0" font-family="Liberation Serif" font-size="9" fill="#333" text-anchor="middle">20</text><rect x="785.0" y="83.0" width="14" height="12" fill="#e8f4dc" opacity="0.9"/><text x="792.0" y="92.0" font-family="Liberation Serif" font-size="9" fill="#333" text-anchor="middle">10</text><rect x="818.5" y="83.0" width="9" height="12" fill="#e8f4dc" opacity="0.9"/><text x="823.0" y="92.0" font-family="Liberation Serif" font-size="9" fill="#333" text-anchor="middle">5</text><rect x="301.0" y="140.0" width="14" height="12" fill="#e8f4dc" opacity="0.9"/><text x="308.0" y="149.0" font-family="Liberation Serif" font-size="9" fill="#333" text-anchor="middle">20</text><rect x="416.0" y="104.0" width="14" height="12" fill="#e8f4dc" opacity="0.9"/><text x="423.0" y="113.0" font-family="Liberation Serif" font-size="9" fill="#333" text-anchor="middle">20</text><rect x="501.0" y="147.0" width="14" height="12" fill="#e8f4dc" opacity="0.9"/><text x="508.0" y="156.0" font-family="Liberation Serif" font-size="9" fill="#333" text-anchor="middle">15</text><rect x="602.0" y="161.0" width="14" height="12" fill="#e8f4dc" opacity="0.9"/><text x="609.0" y="170.0" font-family="Liberation Serif" font-size="9" fill="#333" text-anchor="middle">15</text><rect x="467.0" y="191.0" width="14" height="12" fill="#e8f4dc" opacity="0.9"/><text x="474.0" y="200.0" font-family="Liberation Serif" font-size="9" fill="#333" text-anchor="middle">15</text><rect x="99.0" y="189.0" width="14" height="12" fill="#e8f4dc" opacity="0.9"/><text x="106.0" y="198.0" font-family="Liberation Serif" font-size="9" fill="#333" text-anchor="middle">15</text><rect x="230.0" y="279.0" width="14" height="12" fill="#e8f4dc" opacity="0.9"/><text x="237.0" y="288.0" font-family="Liberation Serif" font-size="9" fill="#333" text-anchor="middle">15</text><rect x="23.0" y="251.0" width="14" height="12" fill="#e8f4dc" opacity="0.9"/><text x="30.0" y="260.0" font-family="Liberation Serif" font-size="9" fill="#333" text-anchor="middle">15</text><rect x="45.0" y="402.0" width="14" height="12" fill="#e8f4dc" opacity="0.9"/><text x="52.0" y="411.0" font-family="Liberation Serif" font-size="9" fill="#333" text-anchor="middle">15</text><rect x="69.0" y="393.0" width="14" height="12" fill="#e8f4dc" opacity="0.9"/><text x="76.0" y="402.0" font-family="Liberation Serif" font-size="9" fill="#333" text-anchor="middle">10</text><rect x="65.5" y="442.0" width="9" height="12" fill="#e8f4dc" opacity="0.9"/><text x="70.0" y="451.0" font-family="Liberation Serif" font-size="9" fill="#333" text-anchor="middle">7</text><rect x="129.0" y="413.0" width="14" height="12" fill="#e8f4dc" opacity="0.9"/><text x="136.0" y="422.0" font-family="Liberation Serif" font-size="9" fill="#333" text-anchor="middle">15</text><rect x="330.0" y="396.0" width="14" height="12" fill="#e8f4dc" opacity="0.9"/><text x="337.0" y="405.0" font-family="Liberation Serif" font-size="9" fill="#333" text-anchor="middle">10</text><rect x="329.5" y="453.0" width="9" height="12" fill="#e8f4dc" opacity="0.9"/><text x="334.0" y="462.0" font-family="Liberation Serif" font-size="9" fill="#333" text-anchor="middle">7</text><rect x="531.0" y="359.0" width="14" height="12" fill="#e8f4dc" opacity="0.9"/><text x="538.0" y="368.0" font-family="Liberation Serif" font-size="9" fill="#333" text-anchor="middle">10</text><rect x="549.5" y="345.0" width="9" height="12" fill="#e8f4dc" opacity="0.9"/><text x="554.0" y="354.0" font-family="Liberation Serif" font-size="9" fill="#333" text-anchor="middle">7</text><rect x="693.0" y="284.0" width="14" height="12" fill="#e8f4dc" opacity="0.9"/><text x="700.0" y="293.0" font-family="Liberation Serif" font-size="9" fill="#333" text-anchor="middle">10</text><rect x="794.0" y="299.0" width="14" height="12" fill="#e8f4dc" opacity="0.9"/><text x="801.0" y="308.0" font-family="Liberation Serif" font-size="9" fill="#333" text-anchor="middle">10</text><rect x="584.5" y="450.0" width="9" height="12" fill="#e8f4dc" opacity="0.9"/><text x="589.0" y="459.0" font-family="Liberation Serif" font-size="9" fill="#333" text-anchor="middle">5</text><rect x="813.5" y="442.0" width="9" height="12" fill="#e8f4dc" opacity="0.9"/><text x="818.0" y="451.0" font-family="Liberation Serif" font-size="9" fill="#333" text-anchor="middle">7</text><rect x="784.0" y="146.0" width="14" height="12" fill="#e8f4dc" opacity="0.9"/><text x="791.0" y="155.0" font-family="Liberation Serif" font-size="9" fill="#333" text-anchor="middle">15</text><text x="216" y="122" font-family="Liberation Sans" font-size="9" fill="#111">24h</text></svg>
<svg class="a" style="left:288px;top:779px" width="830" height="20">
<rect x="0.0" y="0" width="38.2" height="12" fill="#ffffff"/>
<rect x="37.7" y="0" width="38.2" height="12" fill="#dcdcdc"/>
<rect x="75.5" y="0" width="38.2" height="12" fill="#b4b4b4"/>
<rect x="113.2" y="0" width="38.2" height="12" fill="#a0f5ff"/>
<rect x="150.9" y="0" width="38.2" height="12" fill="#00e8ff"/>
<rect x="188.6" y="0" width="38.2" height="12" fill="#12aff5"/>
<rect x="226.4" y="0" width="38.2" height="12" fill="#3278f5"/>
<rect x="264.1" y="0" width="38.2" height="12" fill="#90ee90"/>
<rect x="301.8" y="0" width="38.2" height="12" fill="#86d98c"/>
<rect x="339.5" y="0" width="38.2" height="12" fill="#55cc80"/>
<rect x="377.3" y="0" width="38.2" height="12" fill="#45a300"/>
<rect x="415.0" y="0" width="38.2" height="12" fill="#007000"/>
<rect x="452.7" y="0" width="38.2" height="12" fill="#d4f020"/>
<rect x="490.5" y="0" width="38.2" height="12" fill="#f0f032"/>
<rect x="528.2" y="0" width="38.2" height="12" fill="#ffd21e"/>
<rect x="565.9" y="0" width="38.2" height="12" fill="#ffa078"/>
<rect x="603.6" y="0" width="38.2" height="12" fill="#ff5a00"/>
<rect x="641.4" y="0" width="38.2" height="12" fill="#ff0000"/>
<rect x="679.1" y="0" width="38.2" height="12" fill="#d20000"/>
<rect x="716.8" y="0" width="38.2" height="12" fill="#b40000"/>
<rect x="754.5" y="0" width="38.2" height="12" fill="#780000"/>
<rect x="792.3" y="0" width="38.2" height="12" fill="#500090"/>
<text x="0.5" y="18" font-family="Liberation Serif" font-size="7.5" fill="#333">0</text>
<text x="38.2" y="18" font-family="Liberation Serif" font-size="7.5" fill="#333">0.1</text>
<text x="76.0" y="18" font-family="Liberation Serif" font-size="7.5" fill="#333">0.5</text>
<text x="113.7" y="18" font-family="Liberation Serif" font-size="7.5" fill="#333">1</text>
<text x="151.4" y="18" font-family="Liberation Serif" font-size="7.5" fill="#333">1.5</text>
<text x="189.1" y="18" font-family="Liberation Serif" font-size="7.5" fill="#333">2</text>
<text x="226.9" y="18" font-family="Liberation Serif" font-size="7.5" fill="#333">3</text>
<text x="264.6" y="18" font-family="Liberation Serif" font-size="7.5" fill="#333">5</text>
<text x="302.3" y="18" font-family="Liberation Serif" font-size="7.5" fill="#333">7</text>
<text x="340.0" y="18" font-family="Liberation Serif" font-size="7.5" fill="#333">10</text>
<text x="377.8" y="18" font-family="Liberation Serif" font-size="7.5" fill="#333">15</text>
<text x="415.5" y="18" font-family="Liberation Serif" font-size="7.5" fill="#333">20</text>
<text x="453.2" y="18" font-family="Liberation Serif" font-size="7.5" fill="#333">25</text>
<text x="491.0" y="18" font-family="Liberation Serif" font-size="7.5" fill="#333">30</text>
<text x="528.7" y="18" font-family="Liberation Serif" font-size="7.5" fill="#333">35</text>
<text x="566.4" y="18" font-family="Liberation Serif" font-size="7.5" fill="#333">40</text>
<text x="604.1" y="18" font-family="Liberation Serif" font-size="7.5" fill="#333">45</text>
<text x="641.9" y="18" font-family="Liberation Serif" font-size="7.5" fill="#333">50</text>
<text x="679.6" y="18" font-family="Liberation Serif" font-size="7.5" fill="#333">60</text>
<text x="717.3" y="18" font-family="Liberation Serif" font-size="7.5" fill="#333">70</text>
<text x="755.0" y="18" font-family="Liberation Serif" font-size="7.5" fill="#333">100</text>
<text x="792.8" y="18" font-family="Liberation Serif" font-size="7.5" fill="#333">300</text>
</svg>
<div class="a" style="left:26px;top:851px;font-size:11.5px;color:#111;white-space:nowrap"><b>Po kliknutí na jednu vybranú oblasť na mape</b> sa otvorí nové okno v ktorom sa počítajú produkty INCA</div>
</body></html>
